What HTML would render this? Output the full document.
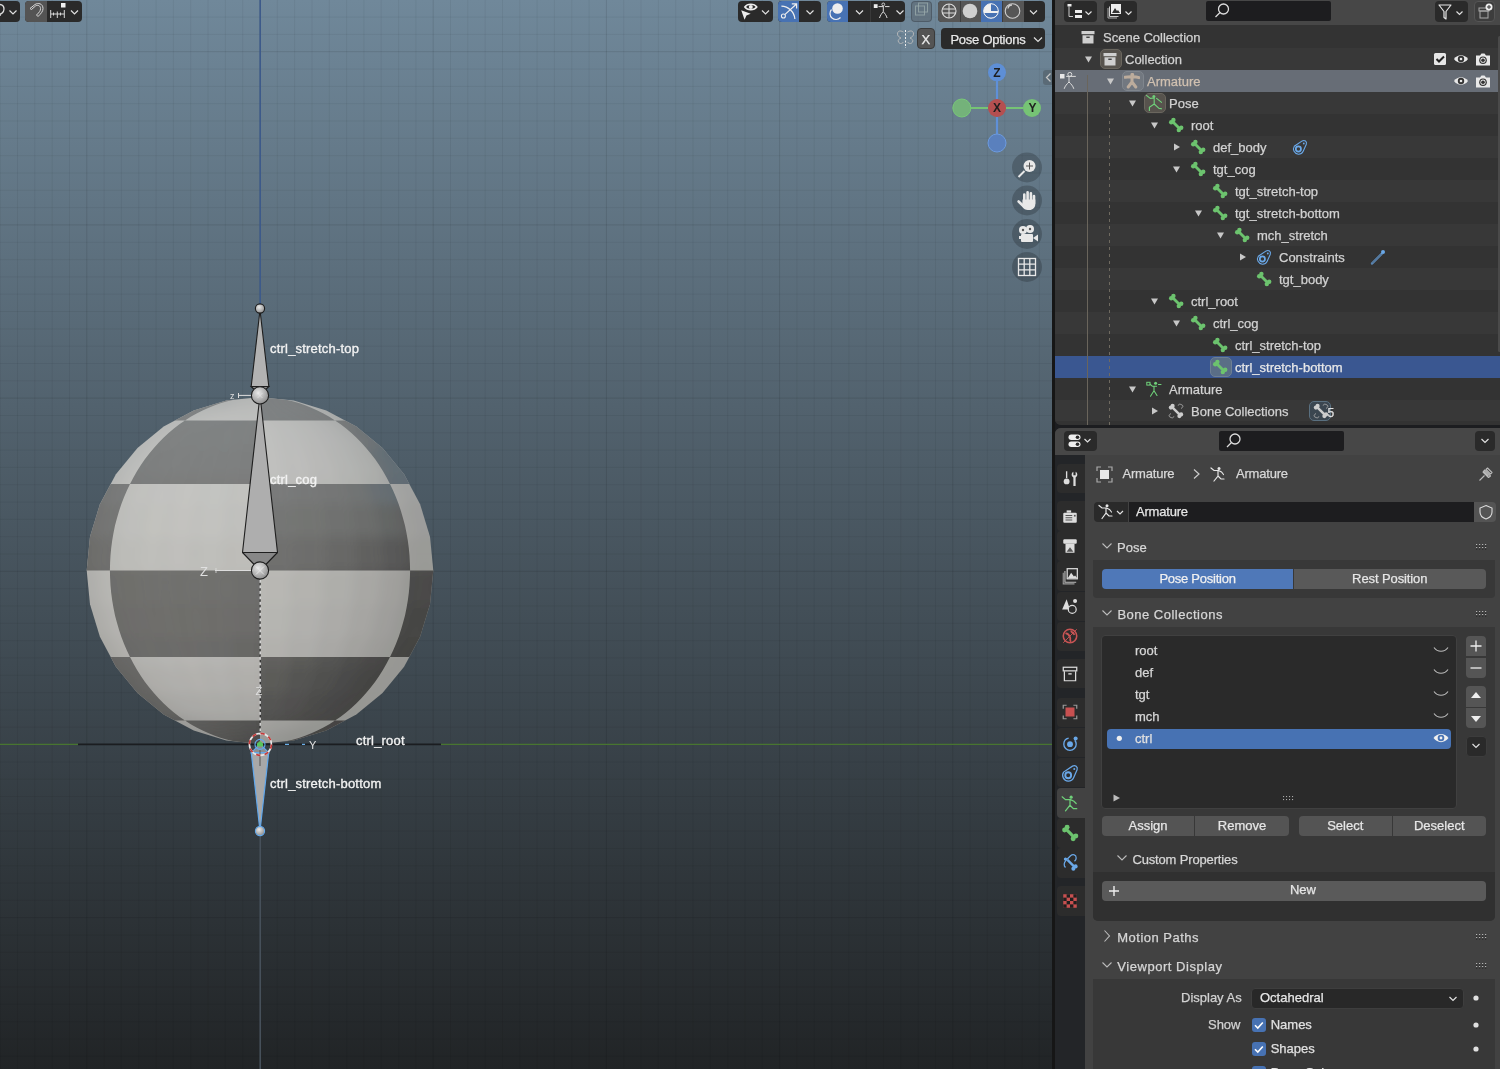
<!DOCTYPE html>
<html><head><meta charset="utf-8">
<style>
*{box-sizing:border-box;margin:0;padding:0}
html,body{width:1500px;height:1069px;overflow:hidden;background:#1c1d20;font-family:"Liberation Sans",sans-serif;font-size:13px;color:#d4d4d4}
.abs{position:absolute}
#vp{position:absolute;left:0;top:0;width:1052px;height:1069px;background:linear-gradient(#70889a,#212426);overflow:hidden;will-change:transform}
.btn{position:absolute;background:#2a2a2a;border-radius:4px;height:21px}
.t{position:absolute;white-space:nowrap;line-height:13px;-webkit-text-stroke:0.25px currentColor}
svg{position:absolute;overflow:visible}
</style></head><body>
<svg width="0" height="0" style="position:absolute;left:0;top:0">
<defs>
<symbol id="i-coll" viewBox="0 0 16 16"><rect x="1.5" y="2" width="13" height="3.2" fill="#cfcfcf"/><path d="M2.5 6.2h11v8.3h-11z" fill="#cfcfcf"/><rect x="6.3" y="7.6" width="3.4" height="1.3" fill="#333"/></symbol>
<symbol id="i-arm" viewBox="0 0 16 16"><g fill="none" stroke="#bcac9c" stroke-width="3" stroke-linecap="round" stroke-linejoin="round"><path d="M1 4.2C4 3.6 12 3.6 15 4.6M8 4V9M8 9L4.2 14M8 9L11.8 14"/></g><circle cx="8.3" cy="1.8" r="1.9" fill="#bcac9c"/></symbol>
<symbol id="i-pose" viewBox="0 0 16 16"><g fill="none" stroke="#6fd07a" stroke-width="1.15" stroke-linecap="round" stroke-linejoin="round"><path d="M0.4 0.4L4.2 3.4 8.2 3M10.6 3.4L15.6 7.4M8.2 3V9M8.2 9L3.4 12.2V15.6M8.2 9L13 13.4 15.6 13.8"/></g><circle cx="7.9" cy="1.6" r="1.5" fill="#6fd07a"/></symbol>
<symbol id="i-bone" viewBox="0 0 16 16"><g fill="#6cc36e"><circle cx="3.2" cy="5.3" r="2.2"/><circle cx="5.4" cy="2.9" r="2.2"/><circle cx="10.8" cy="13.1" r="2.2"/><circle cx="13.2" cy="10.7" r="2.2"/><path d="M3.5 5.5l2-2 7.5 7.5-2 2z"/></g></symbol>
<symbol id="i-con" viewBox="0 0 16 16"><path d="M6.3 15.2A5.2 5.2 0 0 1 2.3 7.2L10.2 1.9C12.6 0.6 15.2 2.5 14.3 5.2L11.2 12.2A5.2 5.2 0 0 1 6.3 15.2z" fill="none" stroke="#6aa8e8" stroke-width="1.1"/><circle cx="6.4" cy="10" r="2.6" fill="none" stroke="#6aa8e8" stroke-width="1.7"/><circle cx="11.8" cy="4.5" r="0.9" fill="#6aa8e8"/></symbol>
<symbol id="i-pencil" viewBox="0 0 16 16"><path d="M2 14.5l9.5-9.5" stroke="#6aa8e8" stroke-width="2.2" stroke-linecap="round"/><path d="M2 14.5l9.5-9.5" stroke="#333" stroke-width="0.8" stroke-linecap="round"/><circle cx="13" cy="3" r="2" fill="#6aa8e8"/></symbol>
<symbol id="i-armdata" viewBox="0 0 16 16"><rect x="0.8" y="1.3" width="3.2" height="2.8" fill="none" stroke="#6fd07a" stroke-width="1"/><circle cx="9.6" cy="2.2" r="1.5" fill="#6fd07a"/><g fill="none" stroke="#6fd07a" stroke-width="1.1" stroke-linecap="round"><path d="M4 3.2l2.3 2h4.2M12.5 3.5h2.5M8 5.2v4.5l-3.5 5.5M8 9.7l3 4.8"/></g></symbol>
<symbol id="i-bonecoll" viewBox="0 0 16 16"><g fill="#cdcdcd"><circle cx="2.9" cy="4.6" r="2.1"/><circle cx="4.6" cy="2.9" r="2.1"/><circle cx="11.4" cy="13.1" r="2.1"/><circle cx="13.1" cy="11.4" r="2.1"/><path d="M3 4.7l1.7-1.7 8.3 8.3-1.7 1.7z"/></g><g fill="none" stroke="#a8a8a8" stroke-width="0.9"><path d="M10.2 2.6a1.6 1.6 0 0 1 2.8-0.9 1.6 1.6 0 0 1 1.5 2.6l-1.5 1.2"/><path d="M5.8 13.4a1.6 1.6 0 0 1-2.8 0.9 1.6 1.6 0 0 1-1.5-2.6l1.5-1.2"/></g></symbol>
<symbol id="i-eye" viewBox="0 0 16 16"><path d="M1 8c3.5-5 10.5-5 14 0-3.5 5-10.5 5-14 0z" fill="#e8e8e8"/><circle cx="8" cy="8" r="3.2" fill="#333"/><circle cx="8" cy="8" r="1.3" fill="#e8e8e8"/></symbol>
<symbol id="i-cam" viewBox="0 0 16 16"><path d="M1 4.5h4l1.5-2h3l1.5 2h4v10h-14z" fill="#e8e8e8"/><circle cx="8" cy="9.2" r="3.8" fill="#333"/><circle cx="8" cy="9.2" r="2.6" fill="#e8e8e8"/><circle cx="8" cy="9.2" r="1.8" fill="#333"/></symbol>
<symbol id="i-posemode" viewBox="0 0 20 20"><rect x="3" y="2" width="4.5" height="4.5" fill="#e8e8e8"/><circle cx="12.8" cy="2.4" r="2" fill="none" stroke="#ddd" stroke-width="1"/><path d="M9.2 4.4h9.6M12 4.4v5.6M12 10c-2 2-4 4-4.8 6.8M12 10c2 2 4 4 4.8 6.8" stroke="#ddd" stroke-width="1" fill="none"/></symbol>
<symbol id="i-chev" viewBox="0 0 10 10"><path d="M1.5 3l3.5 3.5 3.5-3.5" stroke="#e0e0e0" stroke-width="1.2" fill="none"/></symbol>
</defs></svg>

<div id="vp">
<svg width="1052" height="1069" style="left:0;top:0">
<defs>
<radialGradient id="shade" cx="200" cy="470" r="330" gradientUnits="userSpaceOnUse">
<stop offset="0" stop-color="#ffffff"/><stop offset="0.45" stop-color="#fafafa"/><stop offset="0.75" stop-color="#c4c4c4"/><stop offset="1" stop-color="#8c8c8c"/>
</radialGradient>
<radialGradient id="sheen" cx="150" cy="430" r="200" gradientUnits="userSpaceOnUse">
<stop offset="0" stop-color="#2c3440"/><stop offset="0.6" stop-color="#1c2228"/><stop offset="1" stop-color="#000000"/>
</radialGradient>
<radialGradient id="rim" cx="260" cy="570.5" r="174" gradientUnits="userSpaceOnUse">
<stop offset="0.88" stop-color="#5a6e7c" stop-opacity="0"/><stop offset="1" stop-color="#5a6e7c" stop-opacity="0.3"/>
</radialGradient>
<radialGradient id="ball" cx="0.4" cy="0.35" r="0.7">
<stop offset="0" stop-color="#e8e8e8"/><stop offset="1" stop-color="#8a8a8a"/>
</radialGradient>
</defs>
<path d="M0.2 0V1069 M17.5 0V1069 M34.8 0V1069 M52.2 0V1069 M69.5 0V1069 M104.1 0V1069 M121.4 0V1069 M138.8 0V1069 M156.1 0V1069 M173.4 0V1069 M190.7 0V1069 M208.0 0V1069 M225.4 0V1069 M242.7 0V1069 M277.3 0V1069 M294.6 0V1069 M312.0 0V1069 M329.3 0V1069 M346.6 0V1069 M363.9 0V1069 M381.2 0V1069 M398.6 0V1069 M415.9 0V1069 M450.5 0V1069 M467.8 0V1069 M485.2 0V1069 M502.5 0V1069 M519.8 0V1069 M537.1 0V1069 M554.4 0V1069 M571.8 0V1069 M589.1 0V1069 M623.7 0V1069 M641.0 0V1069 M658.4 0V1069 M675.7 0V1069 M693.0 0V1069 M710.3 0V1069 M727.6 0V1069 M745.0 0V1069 M762.3 0V1069 M796.9 0V1069 M814.2 0V1069 M831.6 0V1069 M848.9 0V1069 M866.2 0V1069 M883.5 0V1069 M900.8 0V1069 M918.2 0V1069 M935.5 0V1069 M970.1 0V1069 M987.4 0V1069 M1004.8 0V1069 M1022.1 0V1069 M1039.4 0V1069 M0 17.1H1052 M0 34.4H1052 M0 69.1H1052 M0 86.4H1052 M0 103.7H1052 M0 121.0H1052 M0 138.3H1052 M0 155.7H1052 M0 173.0H1052 M0 190.3H1052 M0 207.6H1052 M0 242.3H1052 M0 259.6H1052 M0 276.9H1052 M0 294.2H1052 M0 311.5H1052 M0 328.9H1052 M0 346.2H1052 M0 363.5H1052 M0 380.8H1052 M0 415.5H1052 M0 432.8H1052 M0 450.1H1052 M0 467.4H1052 M0 484.7H1052 M0 502.1H1052 M0 519.4H1052 M0 536.7H1052 M0 554.0H1052 M0 588.7H1052 M0 606.0H1052 M0 623.3H1052 M0 640.6H1052 M0 657.9H1052 M0 675.3H1052 M0 692.6H1052 M0 709.9H1052 M0 727.2H1052 M0 761.9H1052 M0 779.2H1052 M0 796.5H1052 M0 813.8H1052 M0 831.1H1052 M0 848.5H1052 M0 865.8H1052 M0 883.1H1052 M0 900.4H1052 M0 935.1H1052 M0 952.4H1052 M0 969.7H1052 M0 987.0H1052 M0 1004.3H1052 M0 1021.7H1052 M0 1039.0H1052 M0 1056.3H1052" stroke="#000" stroke-opacity="0.05" stroke-width="1" fill="none"/>
<path d="M86.8 0V1069 M260.0 0V1069 M433.2 0V1069 M606.4 0V1069 M779.6 0V1069 M952.8 0V1069 M0 51.7H1052 M0 224.9H1052 M0 398.1H1052 M0 571.3H1052 M0 744.5H1052 M0 917.7H1052" stroke="#000" stroke-opacity="0.10" stroke-width="1" fill="none"/>

<!-- axis lines -->
<path d="M260.2 0V310" stroke="#3d5a8a" stroke-width="1.6"/>
<path d="M260.2 835V1069" stroke="#46505a" stroke-width="1.6"/>
<path d="M0 744.4H80M440 744.4H1052" stroke="#487530" stroke-width="1.4"/>
<!-- sphere -->
<clipPath id="sil"><path d="M433.3,570.5 L430.0,536.7 L420.1,504.2 L404.1,474.2 L382.5,448.0 L356.3,426.4 L326.3,410.4 L293.8,400.5 L260.0,397.2 L226.2,400.5 L193.7,410.4 L163.7,426.4 L137.5,448.0 L115.9,474.2 L99.9,504.2 L90.0,536.7 L86.7,570.5 L90.0,604.3 L99.9,636.8 L115.9,666.8 L137.5,693.0 L163.7,714.6 L193.7,730.6 L226.2,740.5 L260.0,743.8 L293.8,740.5 L326.3,730.6 L356.3,714.6 L382.5,693.0 L404.1,666.8 L420.1,636.8 L430.0,604.3Z"/></clipPath>
<clipPath id="darkc"><path d="M168.2,729.6 L173.4,720.6 L173.7,720.6 L174.1,720.6 L174.7,720.6 L175.4,720.6 L176.3,720.6 L177.4,720.6 L178.6,720.6 L179.9,720.6 L181.5,720.6 L183.1,720.6 L185.0,720.6 L185.0,720.6 L179.4,716.7 L173.9,712.5 L168.6,708.0 L163.5,703.3 L158.6,698.3 L153.9,693.0 L149.3,687.6 L145.0,681.9 L140.9,676.0 L137.1,669.9 L133.4,663.6 L130.0,657.1 L130.0,657.1 L126.9,657.1 L124.0,657.1 L121.3,657.1 L119.0,657.1 L116.9,657.1 L115.0,657.1 L113.5,657.1 L112.2,657.1 L111.2,657.1 L110.5,657.1 L110.1,657.1 L100.9,662.3 L100.9,662.3 L105.1,669.2 L109.5,675.9 L114.3,682.3 L119.3,688.6 L124.6,694.6 L130.1,700.4 L135.9,705.9 L141.9,711.2 L148.2,716.2 L154.6,721.0 L161.3,725.4 L168.2,729.6Z M76.3,570.5 L86.9,570.5 L87.4,570.5 L88.2,570.5 L89.3,570.5 L90.8,570.5 L92.6,570.5 L94.7,570.5 L97.2,570.5 L99.9,570.5 L102.9,570.5 L106.3,570.5 L109.9,570.5 L109.9,570.5 L110.1,562.9 L110.5,555.4 L111.2,547.9 L112.2,540.4 L113.5,533.0 L115.0,525.6 L116.9,518.4 L119.0,511.2 L121.3,504.2 L124.0,497.3 L126.9,490.5 L130.0,483.9 L130.0,483.9 L126.9,483.9 L124.0,483.9 L121.3,483.9 L119.0,483.9 L116.9,483.9 L115.0,483.9 L113.5,483.9 L112.2,483.9 L111.2,483.9 L110.5,483.9 L110.1,483.9 L100.9,478.7 L100.9,478.7 L97.1,485.7 L93.5,492.9 L90.3,500.2 L87.4,507.7 L84.8,515.3 L82.6,523.0 L80.7,530.7 L79.1,538.6 L77.9,546.5 L77.0,554.5 L76.5,562.5 L76.3,570.5Z M168.2,411.4 L173.4,420.4 L173.7,420.4 L174.1,420.4 L174.7,420.4 L175.4,420.4 L176.3,420.4 L177.4,420.4 L178.6,420.4 L179.9,420.4 L181.5,420.4 L183.1,420.4 L185.0,420.4 L185.0,420.4 L190.7,416.8 L196.6,413.4 L202.6,410.4 L208.7,407.7 L214.9,405.2 L221.2,403.1 L227.5,401.3 L233.9,399.8 L240.4,398.7 L246.9,397.9 L253.5,397.4 L260.0,386.8 L260.0,386.8 L260.0,386.8 L260.0,386.8 L260.0,386.8 L260.0,386.8 L260.0,386.8 L260.0,386.8 L260.0,386.8 L260.0,386.8 L260.0,386.8 L260.0,386.8 L260.0,386.8 L260.0,386.8 L260.0,386.8 L252.0,387.0 L244.0,387.5 L236.0,388.4 L228.1,389.6 L220.2,391.2 L212.5,393.1 L204.8,395.3 L197.2,397.9 L189.7,400.8 L182.4,404.0 L175.2,407.6 L168.2,411.4Z M260.0,754.2 L260.0,754.2 L260.0,754.2 L260.0,754.2 L260.0,754.2 L260.0,754.2 L260.0,754.2 L260.0,754.2 L260.0,754.2 L260.0,754.2 L260.0,754.2 L260.0,754.2 L260.0,754.2 L260.0,754.2 L260.0,743.6 L260.0,743.1 L260.0,742.3 L260.0,741.2 L260.0,739.7 L260.0,737.9 L260.0,735.8 L260.0,733.3 L260.0,730.6 L260.0,727.6 L260.0,724.2 L260.0,720.6 L260.0,720.6 L252.4,720.6 L245.0,720.6 L237.6,720.6 L230.4,720.6 L223.4,720.6 L216.7,720.6 L210.3,720.6 L204.3,720.6 L198.7,720.6 L193.6,720.6 L189.0,720.6 L185.0,720.6 L185.0,720.6 L190.7,724.2 L196.6,727.6 L202.6,730.6 L208.7,733.3 L214.9,735.8 L221.2,737.9 L227.5,739.7 L233.9,741.2 L240.4,742.3 L246.9,743.1 L253.5,743.6 L260.0,754.2Z M130.0,657.1 L137.1,657.1 L145.0,657.1 L153.9,657.1 L163.5,657.1 L173.9,657.1 L185.0,657.1 L196.6,657.1 L208.7,657.1 L221.2,657.1 L233.9,657.1 L246.9,657.1 L260.0,657.1 L260.0,657.1 L260.0,650.5 L260.0,643.7 L260.0,636.8 L260.0,629.8 L260.0,622.6 L260.0,615.4 L260.0,608.0 L260.0,600.6 L260.0,593.1 L260.0,585.6 L260.0,578.1 L260.0,570.5 L260.0,570.5 L244.9,570.5 L229.9,570.5 L215.1,570.5 L200.7,570.5 L186.8,570.5 L173.4,570.5 L160.6,570.5 L148.6,570.5 L137.5,570.5 L127.2,570.5 L118.0,570.5 L109.9,570.5 L109.9,570.5 L110.1,578.1 L110.5,585.6 L111.2,593.1 L112.2,600.6 L113.5,608.0 L115.0,615.4 L116.9,622.6 L119.0,629.8 L121.3,636.8 L124.0,643.7 L126.9,650.5 L130.0,657.1Z M130.0,483.9 L137.1,483.9 L145.0,483.9 L153.9,483.9 L163.5,483.9 L173.9,483.9 L185.0,483.9 L196.6,483.9 L208.7,483.9 L221.2,483.9 L233.9,483.9 L246.9,483.9 L260.0,483.9 L260.0,483.9 L260.0,477.4 L260.0,471.1 L260.0,465.0 L260.0,459.1 L260.0,453.4 L260.0,448.0 L260.0,442.7 L260.0,437.7 L260.0,433.0 L260.0,428.5 L260.0,424.3 L260.0,420.4 L260.0,420.4 L252.4,420.4 L245.0,420.4 L237.6,420.4 L230.4,420.4 L223.4,420.4 L216.7,420.4 L210.3,420.4 L204.3,420.4 L198.7,420.4 L193.6,420.4 L189.0,420.4 L185.0,420.4 L185.0,420.4 L179.4,424.3 L173.9,428.5 L168.6,433.0 L163.5,437.7 L158.6,442.7 L153.9,448.0 L149.3,453.4 L145.0,459.1 L140.9,465.0 L137.1,471.1 L133.4,477.4 L130.0,483.9Z M260.0,720.6 L267.6,720.6 L275.0,720.6 L282.4,720.6 L289.6,720.6 L296.6,720.6 L303.3,720.6 L309.7,720.6 L315.7,720.6 L321.3,720.6 L326.4,720.6 L331.0,720.6 L335.0,720.6 L335.0,720.6 L340.6,716.7 L346.1,712.5 L351.4,708.0 L356.5,703.3 L361.4,698.3 L366.1,693.0 L370.7,687.6 L375.0,681.9 L379.1,676.0 L382.9,669.9 L386.6,663.6 L390.0,657.1 L390.0,657.1 L382.9,657.1 L375.0,657.1 L366.1,657.1 L356.5,657.1 L346.1,657.1 L335.0,657.1 L323.4,657.1 L311.3,657.1 L298.8,657.1 L286.1,657.1 L273.1,657.1 L260.0,657.1 L260.0,657.1 L260.0,663.6 L260.0,669.9 L260.0,676.0 L260.0,681.9 L260.0,687.6 L260.0,693.0 L260.0,698.3 L260.0,703.3 L260.0,708.0 L260.0,712.5 L260.0,716.7 L260.0,720.6Z M260.0,570.5 L275.1,570.5 L290.1,570.5 L304.9,570.5 L319.3,570.5 L333.2,570.5 L346.6,570.5 L359.4,570.5 L371.4,570.5 L382.5,570.5 L392.8,570.5 L402.0,570.5 L410.1,570.5 L410.1,570.5 L409.9,562.9 L409.5,555.4 L408.8,547.9 L407.8,540.4 L406.5,533.0 L405.0,525.6 L403.1,518.4 L401.0,511.2 L398.7,504.2 L396.0,497.3 L393.1,490.5 L390.0,483.9 L390.0,483.9 L382.9,483.9 L375.0,483.9 L366.1,483.9 L356.5,483.9 L346.1,483.9 L335.0,483.9 L323.4,483.9 L311.3,483.9 L298.8,483.9 L286.1,483.9 L273.1,483.9 L260.0,483.9 L260.0,483.9 L260.0,490.5 L260.0,497.3 L260.0,504.2 L260.0,511.2 L260.0,518.4 L260.0,525.6 L260.0,533.0 L260.0,540.4 L260.0,547.9 L260.0,555.4 L260.0,562.9 L260.0,570.5Z M260.0,420.4 L267.6,420.4 L275.0,420.4 L282.4,420.4 L289.6,420.4 L296.6,420.4 L303.3,420.4 L309.7,420.4 L315.7,420.4 L321.3,420.4 L326.4,420.4 L331.0,420.4 L335.0,420.4 L335.0,420.4 L329.3,416.8 L323.4,413.4 L317.4,410.4 L311.3,407.7 L305.1,405.2 L298.8,403.1 L292.5,401.3 L286.1,399.8 L279.6,398.7 L273.1,397.9 L266.5,397.4 L260.0,386.8 L260.0,386.8 L260.0,386.8 L260.0,386.8 L260.0,386.8 L260.0,386.8 L260.0,386.8 L260.0,386.8 L260.0,386.8 L260.0,386.8 L260.0,386.8 L260.0,386.8 L260.0,386.8 L260.0,386.8 L260.0,386.8 L260.0,397.4 L260.0,397.9 L260.0,398.7 L260.0,399.8 L260.0,401.3 L260.0,403.1 L260.0,405.2 L260.0,407.7 L260.0,410.4 L260.0,413.4 L260.0,416.8 L260.0,420.4Z M260.0,754.2 L260.0,754.2 L260.0,754.2 L260.0,754.2 L260.0,754.2 L260.0,754.2 L260.0,754.2 L260.0,754.2 L260.0,754.2 L260.0,754.2 L260.0,754.2 L260.0,754.2 L260.0,754.2 L260.0,754.2 L268.0,754.0 L276.0,753.5 L284.0,752.6 L291.9,751.4 L299.8,749.8 L307.5,747.9 L315.2,745.7 L322.8,743.1 L330.3,740.2 L337.6,737.0 L344.8,733.4 L351.8,729.6 L351.8,729.6 L346.6,720.6 L346.3,720.6 L345.9,720.6 L345.3,720.6 L344.6,720.6 L343.7,720.6 L342.6,720.6 L341.4,720.6 L340.1,720.6 L338.5,720.6 L336.9,720.6 L335.0,720.6 L335.0,720.6 L329.3,724.2 L323.4,727.6 L317.4,730.6 L311.3,733.3 L305.1,735.8 L298.8,737.9 L292.5,739.7 L286.1,741.2 L279.6,742.3 L273.1,743.1 L266.5,743.6 L260.0,754.2Z M390.0,657.1 L393.1,657.1 L396.0,657.1 L398.7,657.1 L401.0,657.1 L403.1,657.1 L405.0,657.1 L406.5,657.1 L407.8,657.1 L408.8,657.1 L409.5,657.1 L409.9,657.1 L419.1,662.3 L419.1,662.3 L422.9,655.3 L426.5,648.1 L429.7,640.8 L432.6,633.3 L435.2,625.7 L437.4,618.0 L439.3,610.3 L440.9,602.4 L442.1,594.5 L443.0,586.5 L443.5,578.5 L443.7,570.5 L443.7,570.5 L433.1,570.5 L432.6,570.5 L431.8,570.5 L430.7,570.5 L429.2,570.5 L427.4,570.5 L425.3,570.5 L422.8,570.5 L420.1,570.5 L417.1,570.5 L413.7,570.5 L410.1,570.5 L410.1,570.5 L409.9,578.1 L409.5,585.6 L408.8,593.1 L407.8,600.6 L406.5,608.0 L405.0,615.4 L403.1,622.6 L401.0,629.8 L398.7,636.8 L396.0,643.7 L393.1,650.5 L390.0,657.1Z M390.0,483.9 L393.1,483.9 L396.0,483.9 L398.7,483.9 L401.0,483.9 L403.1,483.9 L405.0,483.9 L406.5,483.9 L407.8,483.9 L408.8,483.9 L409.5,483.9 L409.9,483.9 L419.1,478.7 L419.1,478.7 L414.9,471.8 L410.5,465.1 L405.7,458.7 L400.7,452.4 L395.4,446.4 L389.9,440.6 L384.1,435.1 L378.1,429.8 L371.8,424.8 L365.4,420.0 L358.7,415.6 L351.8,411.4 L351.8,411.4 L346.6,420.4 L346.3,420.4 L345.9,420.4 L345.3,420.4 L344.6,420.4 L343.7,420.4 L342.6,420.4 L341.4,420.4 L340.1,420.4 L338.5,420.4 L336.9,420.4 L335.0,420.4 L335.0,420.4 L340.6,424.3 L346.1,428.5 L351.4,433.0 L356.5,437.7 L361.4,442.7 L366.1,448.0 L370.7,453.4 L375.0,459.1 L379.1,465.0 L382.9,471.1 L386.6,477.4 L390.0,483.9Z"/></clipPath>
<filter id="sblur" x="-10%" y="-10%" width="120%" height="120%"><feGaussianBlur stdDeviation="6"/></filter>
<g clip-path="url(#sil)">
<g filter="url(#sblur)"><path d="M221 766 227 740 222 770 221 770z" fill="#999995"/><path d="M227 740 229 740 224 770 222 770z" fill="#999995"/><path d="M229 740 232 740 228 770 224 770z" fill="#999995"/><path d="M232 740 236 740 233 770 228 770z" fill="#999995"/><path d="M236 740 241 740 238 770 233 770z" fill="#999995"/><path d="M241 740 247 740 245 770 238 770z" fill="#999995"/><path d="M247 740 253 740 252 770 245 770z" fill="#999995"/><path d="M253 740 260 740 260 770 252 770z" fill="#999995"/><path d="M260 740 267 740 268 770 260 770z" fill="#999995"/><path d="M267 740 273 740 275 770 268 770z" fill="#999995"/><path d="M273 740 279 740 282 770 275 770z" fill="#999995"/><path d="M279 740 284 740 287 770 282 770z" fill="#999995"/><path d="M284 740 288 740 292 770 287 770z" fill="#999995"/><path d="M288 740 291 740 296 770 292 770z" fill="#999995"/><path d="M291 740 293 740 298 770 296 770z" fill="#999995"/><path d="M293 740 299 766 299 770 298 770z" fill="#999995"/><path d="M221 766 227 740 195 731 184 755z" fill="#999995"/><path d="M227 740 229 740 199 731 195 731z" fill="#999995"/><path d="M229 740 232 740 205 731 199 731z" fill="#9b9a97"/><path d="M232 740 236 740 213 731 205 731z" fill="#9c9b98"/><path d="M236 740 241 740 223 731 213 731z" fill="#9c9c99"/><path d="M241 740 247 740 235 731 223 731z" fill="#9d9c99"/><path d="M247 740 253 740 247 731 235 731z" fill="#9d9c99"/><path d="M253 740 260 740 260 731 247 731z" fill="#9c9b98"/><path d="M260 740 267 740 273 731 260 731z" fill="#9b9a97"/><path d="M267 740 273 740 285 731 273 731z" fill="#999995"/><path d="M273 740 279 740 297 731 285 731z" fill="#999995"/><path d="M279 740 284 740 307 731 297 731z" fill="#999995"/><path d="M284 740 288 740 315 731 307 731z" fill="#999995"/><path d="M288 740 291 740 321 731 315 731z" fill="#999995"/><path d="M291 740 293 740 325 731 321 731z" fill="#999995"/><path d="M293 740 299 766 336 755 325 731z" fill="#999995"/><path d="M184 755 195 731 166 715 149 736z" fill="#9c9b98"/><path d="M195 731 199 731 171 715 166 715z" fill="#9f9e9b"/><path d="M199 731 205 731 180 715 171 715z" fill="#a1a19d"/><path d="M205 731 213 731 192 715 180 715z" fill="#a3a29f"/><path d="M213 731 223 731 207 715 192 715z" fill="#a4a3a0"/><path d="M223 731 235 731 223 715 207 715z" fill="#a5a4a1"/><path d="M235 731 247 731 241 715 223 715z" fill="#a4a4a0"/><path d="M247 731 260 731 260 715 241 715z" fill="#a3a39f"/><path d="M260 731 273 731 279 715 260 715z" fill="#a2a19e"/><path d="M273 731 285 731 297 715 279 715z" fill="#9f9f9b"/><path d="M285 731 297 731 313 715 297 715z" fill="#9c9c98"/><path d="M297 731 307 731 328 715 313 715z" fill="#999995"/><path d="M307 731 315 731 340 715 328 715z" fill="#999995"/><path d="M315 731 321 731 349 715 340 715z" fill="#999995"/><path d="M321 731 325 731 354 715 349 715z" fill="#999995"/><path d="M325 731 336 755 371 736 354 715z" fill="#999995"/><path d="M149 736 166 715 140 693 119 711z" fill="#a1a09d"/><path d="M166 715 171 715 147 693 140 693z" fill="#a5a4a0"/><path d="M171 715 180 715 158 693 147 693z" fill="#a8a7a3"/><path d="M180 715 192 715 173 693 158 693z" fill="#aaa9a6"/><path d="M192 715 207 715 192 693 173 693z" fill="#abaaa7"/><path d="M207 715 223 715 213 693 192 693z" fill="#acaba7"/><path d="M223 715 241 715 236 693 213 693z" fill="#ababa7"/><path d="M241 715 260 715 260 693 236 693z" fill="#aaa9a6"/><path d="M260 715 279 715 284 693 260 693z" fill="#a8a7a4"/><path d="M279 715 297 715 307 693 284 693z" fill="#a5a4a1"/><path d="M297 715 313 715 328 693 307 693z" fill="#a1a09d"/><path d="M313 715 328 715 347 693 328 693z" fill="#9d9c99"/><path d="M328 715 340 715 362 693 347 693z" fill="#999995"/><path d="M340 715 349 715 373 693 362 693z" fill="#999995"/><path d="M349 715 354 715 380 693 373 693z" fill="#999995"/><path d="M354 715 371 736 401 711 380 693z" fill="#999995"/><path d="M119 711 140 693 119 667 94 681z" fill="#a5a4a1"/><path d="M140 693 147 693 127 667 119 667z" fill="#a9a9a5"/><path d="M147 693 158 693 140 667 127 667z" fill="#adaca9"/><path d="M158 693 173 693 158 667 140 667z" fill="#b0afab"/><path d="M173 693 192 693 180 667 158 667z" fill="#b1b0ad"/><path d="M192 693 213 693 205 667 180 667z" fill="#b2b1ad"/><path d="M213 693 236 693 232 667 205 667z" fill="#b1b0ad"/><path d="M236 693 260 693 260 667 232 667z" fill="#b0afab"/><path d="M260 693 284 693 288 667 260 667z" fill="#adaca9"/><path d="M284 693 307 693 315 667 288 667z" fill="#aaa9a6"/><path d="M307 693 328 693 340 667 315 667z" fill="#a5a5a1"/><path d="M328 693 347 693 362 667 340 667z" fill="#a09f9c"/><path d="M347 693 362 693 380 667 362 667z" fill="#9a9996"/><path d="M362 693 373 693 393 667 380 667z" fill="#999995"/><path d="M373 693 380 693 401 667 393 667z" fill="#999995"/><path d="M380 693 401 711 426 681 401 667z" fill="#999995"/><path d="M94 681 119 667 103 637 76 647z" fill="#a9a8a4"/><path d="M119 667 127 667 112 637 103 637z" fill="#aeada9"/><path d="M127 667 140 667 127 637 112 637z" fill="#b2b1ad"/><path d="M140 667 158 667 147 637 127 637z" fill="#b4b4b0"/><path d="M158 667 180 667 171 637 147 637z" fill="#b6b5b2"/><path d="M180 667 205 667 199 637 171 637z" fill="#b7b6b2"/><path d="M205 667 232 667 229 637 199 637z" fill="#b6b5b2"/><path d="M232 667 260 667 260 637 229 637z" fill="#b5b4b0"/><path d="M260 667 288 667 291 637 260 637z" fill="#b2b1ad"/><path d="M288 667 315 667 321 637 291 637z" fill="#aeadaa"/><path d="M315 667 340 667 349 637 321 637z" fill="#a9a8a5"/><path d="M340 667 362 667 373 637 349 637z" fill="#a3a29f"/><path d="M362 667 380 667 393 637 373 637z" fill="#9d9c99"/><path d="M380 667 393 667 408 637 393 637z" fill="#999995"/><path d="M393 667 401 667 417 637 408 637z" fill="#999995"/><path d="M401 667 426 681 444 647 417 637z" fill="#999995"/><path d="M76 647 103 637 93 604 65 609z" fill="#acaba7"/><path d="M103 637 112 637 103 604 93 604z" fill="#b1b0ac"/><path d="M112 637 127 637 119 604 103 604z" fill="#b5b4b1"/><path d="M127 637 147 637 140 604 119 604z" fill="#b8b7b4"/><path d="M147 637 171 637 166 604 140 604z" fill="#bab9b5"/><path d="M171 637 199 637 195 604 166 604z" fill="#bbbab6"/><path d="M199 637 229 637 227 604 195 604z" fill="#bab9b6"/><path d="M229 637 260 637 260 604 227 604z" fill="#b8b7b4"/><path d="M260 637 291 637 293 604 260 604z" fill="#b5b5b1"/><path d="M291 637 321 637 325 604 293 604z" fill="#b1b0ad"/><path d="M321 637 349 637 354 604 325 604z" fill="#acaba8"/><path d="M349 637 373 637 380 604 354 604z" fill="#a6a5a2"/><path d="M373 637 393 637 401 604 380 604z" fill="#9f9e9b"/><path d="M393 637 408 637 417 604 401 604z" fill="#999995"/><path d="M408 637 417 637 427 604 417 604z" fill="#999995"/><path d="M417 637 444 647 455 609 427 604z" fill="#999995"/><path d="M65 609 93 604 90 570 61 570z" fill="#aeadaa"/><path d="M93 604 103 604 100 570 90 570z" fill="#b3b2af"/><path d="M103 604 119 604 116 570 100 570z" fill="#b8b7b3"/><path d="M119 604 140 604 137 570 116 570z" fill="#bbbab6"/><path d="M140 604 166 604 164 570 137 570z" fill="#bdbcb8"/><path d="M166 604 195 604 194 570 164 570z" fill="#bdbcb9"/><path d="M195 604 227 604 226 570 194 570z" fill="#bdbcb8"/><path d="M227 604 260 604 260 570 226 570z" fill="#bbbab6"/><path d="M260 604 293 604 294 570 260 570z" fill="#b8b7b3"/><path d="M293 604 325 604 326 570 294 570z" fill="#b4b3af"/><path d="M325 604 354 604 356 570 326 570z" fill="#aeaeaa"/><path d="M354 604 380 604 383 570 356 570z" fill="#a8a7a4"/><path d="M380 604 401 604 404 570 383 570z" fill="#a1a09d"/><path d="M401 604 417 604 420 570 404 570z" fill="#999995"/><path d="M417 604 427 604 430 570 420 570z" fill="#999995"/><path d="M427 604 455 609 459 570 430 570z" fill="#999995"/><path d="M61 570 90 570 93 537 65 532z" fill="#b1b0ad"/><path d="M90 570 100 570 103 537 93 537z" fill="#b6b6b2"/><path d="M100 570 116 570 119 537 103 537z" fill="#babab6"/><path d="M116 570 137 570 140 537 119 537z" fill="#bdbdb9"/><path d="M137 570 164 570 166 537 140 537z" fill="#bfbfbb"/><path d="M164 570 194 570 195 537 166 537z" fill="#c0bfbc"/><path d="M194 570 226 570 227 537 195 537z" fill="#bfbfbb"/><path d="M226 570 260 570 260 537 227 537z" fill="#bebdb9"/><path d="M260 570 294 570 293 537 260 537z" fill="#bbbab7"/><path d="M294 570 326 570 325 537 293 537z" fill="#b7b6b3"/><path d="M326 570 356 570 354 537 325 537z" fill="#b1b1ae"/><path d="M356 570 383 570 380 537 354 537z" fill="#ababa7"/><path d="M383 570 404 570 401 537 380 537z" fill="#a4a4a1"/><path d="M404 570 420 570 417 537 401 537z" fill="#9c9c99"/><path d="M420 570 430 570 427 537 417 537z" fill="#9b9b98"/><path d="M430 570 459 570 455 532 427 537z" fill="#9b9b98"/><path d="M65 532 93 537 103 504 76 494z" fill="#b4b4b1"/><path d="M93 537 103 537 112 504 103 504z" fill="#b9b9b6"/><path d="M103 537 119 537 127 504 112 504z" fill="#bdbdba"/><path d="M119 537 140 537 147 504 127 504z" fill="#c0c0bd"/><path d="M140 537 166 537 171 504 147 504z" fill="#c2c2be"/><path d="M166 537 195 537 199 504 171 504z" fill="#c3c2bf"/><path d="M195 537 227 537 229 504 199 504z" fill="#c2c2bf"/><path d="M227 537 260 537 260 504 229 504z" fill="#c0c0bd"/><path d="M260 537 293 537 291 504 260 504z" fill="#bebdba"/><path d="M293 537 325 537 321 504 291 504z" fill="#babab7"/><path d="M325 537 354 537 349 504 321 504z" fill="#b5b5b2"/><path d="M354 537 380 537 373 504 349 504z" fill="#afafac"/><path d="M380 537 401 537 393 504 373 504z" fill="#a9a9a6"/><path d="M401 537 417 537 408 504 393 504z" fill="#a1a19f"/><path d="M417 537 427 537 417 504 408 504z" fill="#9e9e9c"/><path d="M427 537 455 532 444 494 417 504z" fill="#9e9e9c"/><path d="M76 494 103 504 119 474 94 460z" fill="#b7b7b5"/><path d="M103 504 112 504 127 474 119 474z" fill="#bbbcb9"/><path d="M112 504 127 504 140 474 127 474z" fill="#bfbfbc"/><path d="M127 504 147 504 158 474 140 474z" fill="#c2c2bf"/><path d="M147 504 171 504 180 474 158 474z" fill="#c3c3c1"/><path d="M171 504 199 504 205 474 180 474z" fill="#c4c4c1"/><path d="M199 504 229 504 232 474 205 474z" fill="#c3c4c1"/><path d="M229 504 260 504 260 474 232 474z" fill="#c2c2bf"/><path d="M260 504 291 504 288 474 260 474z" fill="#bfc0bd"/><path d="M291 504 321 504 315 474 288 474z" fill="#bcbcb9"/><path d="M321 504 349 504 340 474 315 474z" fill="#b7b8b5"/><path d="M349 504 373 504 362 474 340 474z" fill="#b2b3b0"/><path d="M373 504 393 504 380 474 362 474z" fill="#acadaa"/><path d="M393 504 408 504 393 474 380 474z" fill="#a6a6a4"/><path d="M408 504 417 504 401 474 393 474z" fill="#a1a2a0"/><path d="M417 504 444 494 426 460 401 474z" fill="#a1a2a0"/><path d="M94 460 119 474 140 448 119 430z" fill="#b8b9b7"/><path d="M119 474 127 474 147 448 140 448z" fill="#bcbdbb"/><path d="M127 474 140 474 158 448 147 448z" fill="#bfc0be"/><path d="M140 474 158 474 173 448 158 448z" fill="#c2c2c0"/><path d="M158 474 180 474 192 448 173 448z" fill="#c3c4c1"/><path d="M180 474 205 474 213 448 192 448z" fill="#c4c4c2"/><path d="M205 474 232 474 236 448 213 448z" fill="#c3c4c1"/><path d="M232 474 260 474 260 448 236 448z" fill="#c2c2c0"/><path d="M260 474 288 474 284 448 260 448z" fill="#c0c0be"/><path d="M288 474 315 474 307 448 284 448z" fill="#bdbdbb"/><path d="M315 474 340 474 328 448 307 448z" fill="#b9b9b7"/><path d="M340 474 362 474 347 448 328 448z" fill="#b4b5b3"/><path d="M362 474 380 474 362 448 347 448z" fill="#afb0ae"/><path d="M380 474 393 474 373 448 362 448z" fill="#aaaba9"/><path d="M393 474 401 474 380 448 373 448z" fill="#a4a5a3"/><path d="M401 474 426 460 401 430 380 448z" fill="#a4a5a3"/><path d="M119 430 140 448 166 426 149 405z" fill="#b9bab8"/><path d="M140 448 147 448 171 426 166 426z" fill="#bcbdbb"/><path d="M147 448 158 448 180 426 171 426z" fill="#bfbfbd"/><path d="M158 448 173 448 192 426 180 426z" fill="#c1c1bf"/><path d="M173 448 192 448 207 426 192 426z" fill="#c2c3c0"/><path d="M192 448 213 448 223 426 207 426z" fill="#c2c3c1"/><path d="M213 448 236 448 241 426 223 426z" fill="#c2c3c0"/><path d="M236 448 260 448 260 426 241 426z" fill="#c1c2bf"/><path d="M260 448 284 448 279 426 260 426z" fill="#bfc0be"/><path d="M284 448 307 448 297 426 279 426z" fill="#bcbdbb"/><path d="M307 448 328 448 313 426 297 426z" fill="#b9bab8"/><path d="M328 448 347 448 328 426 313 426z" fill="#b5b6b5"/><path d="M347 448 362 448 340 426 328 426z" fill="#b1b2b1"/><path d="M362 448 373 448 349 426 340 426z" fill="#adaead"/><path d="M373 448 380 448 354 426 349 426z" fill="#a8aaa8"/><path d="M380 448 401 430 371 405 354 426z" fill="#a6a8a6"/><path d="M149 405 166 426 195 410 184 386z" fill="#b8b9b8"/><path d="M166 426 171 426 199 410 195 410z" fill="#bbbcba"/><path d="M171 426 180 426 205 410 199 410z" fill="#bcbebc"/><path d="M180 426 192 426 213 410 205 410z" fill="#bebfbd"/><path d="M192 426 207 426 223 410 213 410z" fill="#bfc0be"/><path d="M207 426 223 426 235 410 223 410z" fill="#bfc0be"/><path d="M223 426 241 426 247 410 235 410z" fill="#bfc0be"/><path d="M241 426 260 426 260 410 247 410z" fill="#bebfbd"/><path d="M260 426 279 426 273 410 260 410z" fill="#bdbebc"/><path d="M279 426 297 426 285 410 273 410z" fill="#bbbcba"/><path d="M297 426 313 426 297 410 285 410z" fill="#b8bab8"/><path d="M313 426 328 426 307 410 297 410z" fill="#b6b7b5"/><path d="M328 426 340 426 315 410 307 410z" fill="#b3b4b2"/><path d="M340 426 349 426 321 410 315 410z" fill="#afb1af"/><path d="M349 426 354 426 325 410 321 410z" fill="#acadac"/><path d="M354 426 371 405 336 386 325 410z" fill="#a9aaa9"/><path d="M184 386 195 410 227 401 221 375z" fill="#b6b8b6"/><path d="M195 410 199 410 229 401 227 401z" fill="#b8b9b8"/><path d="M199 410 205 410 232 401 229 401z" fill="#b9bbb9"/><path d="M205 410 213 410 236 401 232 401z" fill="#babbba"/><path d="M213 410 223 410 241 401 236 401z" fill="#bbbcba"/><path d="M223 410 235 410 247 401 241 401z" fill="#bbbcbb"/><path d="M235 410 247 410 253 401 247 401z" fill="#bbbcba"/><path d="M247 410 260 410 260 401 253 401z" fill="#babbba"/><path d="M260 410 273 410 267 401 260 401z" fill="#b9bbb9"/><path d="M273 410 285 410 273 401 267 401z" fill="#b8b9b8"/><path d="M285 410 297 410 279 401 273 401z" fill="#b7b8b7"/><path d="M297 410 307 410 284 401 279 401z" fill="#b5b6b5"/><path d="M307 410 315 410 288 401 284 401z" fill="#b3b4b3"/><path d="M315 410 321 410 291 401 288 401z" fill="#b1b3b1"/><path d="M321 410 325 410 293 401 291 401z" fill="#afb1af"/><path d="M325 410 336 386 299 375 293 401z" fill="#adafae"/><path d="M221 375 227 401 222 371 221 371z" fill="#b4b5b4"/><path d="M227 401 229 401 224 371 222 371z" fill="#b4b6b4"/><path d="M229 401 232 401 228 371 224 371z" fill="#b5b6b5"/><path d="M232 401 236 401 233 371 228 371z" fill="#b5b6b5"/><path d="M236 401 241 401 238 371 233 371z" fill="#b5b7b5"/><path d="M241 401 247 401 245 371 238 371z" fill="#b5b7b5"/><path d="M247 401 253 401 252 371 245 371z" fill="#b5b7b5"/><path d="M253 401 260 401 260 371 252 371z" fill="#b5b6b5"/><path d="M260 401 267 401 268 371 260 371z" fill="#b5b6b5"/><path d="M267 401 273 401 275 371 268 371z" fill="#b4b6b5"/><path d="M273 401 279 401 282 371 275 371z" fill="#b4b5b4"/><path d="M279 401 284 401 287 371 282 371z" fill="#b3b5b3"/><path d="M284 401 288 401 292 371 287 371z" fill="#b2b4b3"/><path d="M288 401 291 401 296 371 292 371z" fill="#b2b3b2"/><path d="M291 401 293 401 298 371 296 371z" fill="#b1b3b2"/><path d="M293 401 299 375 299 371 298 371z" fill="#b0b2b1"/></g>
<g clip-path="url(#darkc)"><g filter="url(#sblur)"><path d="M221 766 227 740 222 770 221 770z" fill="#4c4b4a"/><path d="M227 740 229 740 224 770 222 770z" fill="#4c4b4a"/><path d="M229 740 232 740 228 770 224 770z" fill="#4c4b4a"/><path d="M232 740 236 740 233 770 228 770z" fill="#4b4b49"/><path d="M236 740 241 740 238 770 233 770z" fill="#4b4b49"/><path d="M241 740 247 740 245 770 238 770z" fill="#4b4a49"/><path d="M247 740 253 740 252 770 245 770z" fill="#4a4a48"/><path d="M253 740 260 740 260 770 252 770z" fill="#4a4a48"/><path d="M260 740 267 740 268 770 260 770z" fill="#494948"/><path d="M267 740 273 740 275 770 268 770z" fill="#494947"/><path d="M273 740 279 740 282 770 275 770z" fill="#494847"/><path d="M279 740 284 740 287 770 282 770z" fill="#484847"/><path d="M284 740 288 740 292 770 287 770z" fill="#484846"/><path d="M288 740 291 740 296 770 292 770z" fill="#484746"/><path d="M291 740 293 740 298 770 296 770z" fill="#484746"/><path d="M293 740 299 766 299 770 298 770z" fill="#484746"/><path d="M221 766 227 740 195 731 184 755z" fill="#51514f"/><path d="M227 740 229 740 199 731 195 731z" fill="#51504f"/><path d="M229 740 232 740 205 731 199 731z" fill="#51514f"/><path d="M232 740 236 740 213 731 205 731z" fill="#51504f"/><path d="M236 740 241 740 223 731 213 731z" fill="#50504e"/><path d="M241 740 247 740 235 731 223 731z" fill="#4f4f4d"/><path d="M247 740 253 740 247 731 235 731z" fill="#4e4e4c"/><path d="M253 740 260 740 260 731 247 731z" fill="#4d4c4b"/><path d="M260 740 267 740 273 731 260 731z" fill="#4b4a49"/><path d="M267 740 273 740 285 731 273 731z" fill="#494847"/><path d="M273 740 279 740 297 731 285 731z" fill="#484746"/><path d="M279 740 284 740 307 731 297 731z" fill="#464645"/><path d="M284 740 288 740 315 731 307 731z" fill="#464544"/><path d="M288 740 291 740 321 731 315 731z" fill="#454543"/><path d="M291 740 293 740 325 731 321 731z" fill="#444443"/><path d="M293 740 299 766 336 755 325 731z" fill="#444442"/><path d="M184 755 195 731 166 715 149 736z" fill="#585856"/><path d="M195 731 199 731 171 715 166 715z" fill="#5a5957"/><path d="M199 731 205 731 180 715 171 715z" fill="#5a5a58"/><path d="M205 731 213 731 192 715 180 715z" fill="#5a5a58"/><path d="M213 731 223 731 207 715 192 715z" fill="#595957"/><path d="M223 731 235 731 223 715 207 715z" fill="#585755"/><path d="M235 731 247 731 241 715 223 715z" fill="#555553"/><path d="M247 731 260 731 260 715 241 715z" fill="#535251"/><path d="M260 731 273 731 279 715 260 715z" fill="#504f4e"/><path d="M273 731 285 731 297 715 279 715z" fill="#4c4c4a"/><path d="M285 731 297 731 313 715 297 715z" fill="#494847"/><path d="M297 731 307 731 328 715 313 715z" fill="#464544"/><path d="M307 731 315 731 340 715 328 715z" fill="#444442"/><path d="M315 731 321 731 349 715 340 715z" fill="#434341"/><path d="M321 731 325 731 354 715 349 715z" fill="#424241"/><path d="M325 731 336 755 371 736 354 715z" fill="#424140"/><path d="M149 736 166 715 140 693 119 711z" fill="#5e5e5c"/><path d="M166 715 171 715 147 693 140 693z" fill="#60605e"/><path d="M171 715 180 715 158 693 147 693z" fill="#626260"/><path d="M180 715 192 715 173 693 158 693z" fill="#646361"/><path d="M192 715 207 715 192 693 173 693z" fill="#626260"/><path d="M207 715 223 715 213 693 192 693z" fill="#60605e"/><path d="M223 715 241 715 236 693 213 693z" fill="#5d5d5b"/><path d="M241 715 260 715 260 693 236 693z" fill="#595957"/><path d="M260 715 279 715 284 693 260 693z" fill="#555553"/><path d="M279 715 297 715 307 693 284 693z" fill="#51504f"/><path d="M297 715 313 715 328 693 307 693z" fill="#4c4c4a"/><path d="M313 715 328 715 347 693 328 693z" fill="#474746"/><path d="M328 715 340 715 362 693 347 693z" fill="#444342"/><path d="M340 715 349 715 373 693 362 693z" fill="#424241"/><path d="M349 715 354 715 380 693 373 693z" fill="#414140"/><path d="M354 715 371 736 401 711 380 693z" fill="#41403f"/><path d="M119 711 140 693 119 667 94 681z" fill="#61605e"/><path d="M140 693 147 693 127 667 119 667z" fill="#636361"/><path d="M147 693 158 693 140 667 127 667z" fill="#666563"/><path d="M158 693 173 693 158 667 140 667z" fill="#676765"/><path d="M173 693 192 693 180 667 158 667z" fill="#686866"/><path d="M192 693 213 693 205 667 180 667z" fill="#696866"/><path d="M213 693 236 693 232 667 205 667z" fill="#656563"/><path d="M236 693 260 693 260 667 232 667z" fill="#60605e"/><path d="M260 693 284 693 288 667 260 667z" fill="#5b5b59"/><path d="M284 693 307 693 315 667 288 667z" fill="#555553"/><path d="M307 693 328 693 340 667 315 667z" fill="#504f4e"/><path d="M328 693 347 693 362 667 340 667z" fill="#4a4a48"/><path d="M347 693 362 693 380 667 362 667z" fill="#454543"/><path d="M362 693 373 693 393 667 380 667z" fill="#434241"/><path d="M373 693 380 693 401 667 393 667z" fill="#414140"/><path d="M380 693 401 711 426 681 401 667z" fill="#41403f"/><path d="M94 681 119 667 103 637 76 647z" fill="#636260"/><path d="M119 667 127 667 112 637 103 637z" fill="#666563"/><path d="M127 667 140 667 127 637 112 637z" fill="#686866"/><path d="M140 667 158 667 147 637 127 637z" fill="#6a6a68"/><path d="M158 667 180 667 171 637 147 637z" fill="#6b6b69"/><path d="M180 667 205 667 199 637 171 637z" fill="#6c6b69"/><path d="M205 667 232 667 229 637 199 637z" fill="#6b6b69"/><path d="M232 667 260 667 260 637 229 637z" fill="#686765"/><path d="M260 667 288 667 291 637 260 637z" fill="#62615f"/><path d="M288 667 315 667 321 637 291 637z" fill="#5b5b59"/><path d="M315 667 340 667 349 637 321 637z" fill="#545452"/><path d="M340 667 362 667 373 637 349 637z" fill="#4e4e4c"/><path d="M362 667 380 667 393 637 373 637z" fill="#484746"/><path d="M380 667 393 667 408 637 393 637z" fill="#444442"/><path d="M393 667 401 667 417 637 408 637z" fill="#434241"/><path d="M401 667 426 681 444 647 417 637z" fill="#424240"/><path d="M76 647 103 637 93 604 65 609z" fill="#656462"/><path d="M103 637 112 637 103 604 93 604z" fill="#686865"/><path d="M112 637 127 637 119 604 103 604z" fill="#6b6a68"/><path d="M127 637 147 637 140 604 119 604z" fill="#6d6c6a"/><path d="M147 637 171 637 166 604 140 604z" fill="#6e6d6b"/><path d="M171 637 199 637 195 604 166 604z" fill="#6e6e6b"/><path d="M199 637 229 637 227 604 195 604z" fill="#6e6d6b"/><path d="M229 637 260 637 260 604 227 604z" fill="#6d6c6a"/><path d="M260 637 291 637 293 604 260 604z" fill="#686866"/><path d="M291 637 321 637 325 604 293 604z" fill="#61605f"/><path d="M321 637 349 637 354 604 325 604z" fill="#5a5957"/><path d="M349 637 373 637 380 604 354 604z" fill="#525250"/><path d="M373 637 393 637 401 604 380 604z" fill="#4c4b4a"/><path d="M393 637 408 637 417 604 401 604z" fill="#474645"/><path d="M408 637 417 637 427 604 417 604z" fill="#454543"/><path d="M417 637 444 647 455 609 427 604z" fill="#444443"/><path d="M65 609 93 604 90 570 61 570z" fill="#666664"/><path d="M93 604 103 604 100 570 90 570z" fill="#6a6967"/><path d="M103 604 119 604 116 570 100 570z" fill="#6c6c6a"/><path d="M119 604 140 604 137 570 116 570z" fill="#6e6e6b"/><path d="M140 604 166 604 164 570 137 570z" fill="#6f6f6d"/><path d="M166 604 195 604 194 570 164 570z" fill="#706f6d"/><path d="M195 604 227 604 226 570 194 570z" fill="#6f6f6d"/><path d="M227 604 260 604 260 570 226 570z" fill="#6e6e6c"/><path d="M260 604 293 604 294 570 260 570z" fill="#6c6c6a"/><path d="M293 604 325 604 326 570 294 570z" fill="#676765"/><path d="M325 604 354 604 356 570 326 570z" fill="#5f5f5d"/><path d="M354 604 380 604 383 570 356 570z" fill="#585756"/><path d="M380 604 401 604 404 570 383 570z" fill="#51504f"/><path d="M401 604 417 604 420 570 404 570z" fill="#4a4a48"/><path d="M417 604 427 604 430 570 420 570z" fill="#484847"/><path d="M427 604 455 609 459 570 430 570z" fill="#484746"/><path d="M61 570 90 570 93 537 65 532z" fill="#6a6a68"/><path d="M90 570 100 570 103 537 93 537z" fill="#6d6d6b"/><path d="M100 570 116 570 119 537 103 537z" fill="#70706e"/><path d="M116 570 137 570 140 537 119 537z" fill="#727170"/><path d="M137 570 164 570 166 537 140 537z" fill="#737371"/><path d="M164 570 194 570 195 537 166 537z" fill="#737371"/><path d="M194 570 226 570 227 537 195 537z" fill="#737371"/><path d="M226 570 260 570 260 537 227 537z" fill="#727270"/><path d="M260 570 294 570 293 537 260 537z" fill="#70706e"/><path d="M294 570 326 570 325 537 293 537z" fill="#6d6d6c"/><path d="M326 570 356 570 354 537 325 537z" fill="#686866"/><path d="M356 570 383 570 380 537 354 537z" fill="#60605f"/><path d="M383 570 404 570 401 537 380 537z" fill="#595958"/><path d="M404 570 420 570 417 537 401 537z" fill="#525251"/><path d="M420 570 430 570 427 537 417 537z" fill="#50504f"/><path d="M430 570 459 570 455 532 427 537z" fill="#4f4f4e"/><path d="M65 532 93 537 103 504 76 494z" fill="#70706f"/><path d="M93 537 103 537 112 504 103 504z" fill="#737372"/><path d="M103 537 119 537 127 504 112 504z" fill="#757674"/><path d="M119 537 140 537 147 504 127 504z" fill="#777776"/><path d="M140 537 166 537 171 504 147 504z" fill="#787877"/><path d="M166 537 195 537 199 504 171 504z" fill="#787977"/><path d="M195 537 227 537 229 504 199 504z" fill="#787877"/><path d="M227 537 260 537 260 504 229 504z" fill="#777776"/><path d="M260 537 293 537 291 504 260 504z" fill="#757675"/><path d="M293 537 325 537 321 504 291 504z" fill="#737472"/><path d="M325 537 354 537 349 504 321 504z" fill="#707170"/><path d="M354 537 380 537 373 504 349 504z" fill="#6c6d6c"/><path d="M380 537 401 537 393 504 373 504z" fill="#646665"/><path d="M401 537 417 537 408 504 393 504z" fill="#5e5f5f"/><path d="M417 537 427 537 417 504 408 504z" fill="#5b5c5c"/><path d="M427 537 455 532 444 494 417 504z" fill="#5a5b5b"/><path d="M76 494 103 504 119 474 94 460z" fill="#747675"/><path d="M103 504 112 504 127 474 119 474z" fill="#777878"/><path d="M112 504 127 504 140 474 127 474z" fill="#797a7a"/><path d="M127 504 147 504 158 474 140 474z" fill="#7a7c7b"/><path d="M147 504 171 504 180 474 158 474z" fill="#7b7d7c"/><path d="M171 504 199 504 205 474 180 474z" fill="#7c7d7c"/><path d="M199 504 229 504 232 474 205 474z" fill="#7b7d7c"/><path d="M229 504 260 504 260 474 232 474z" fill="#7b7c7b"/><path d="M260 504 291 504 288 474 260 474z" fill="#797a7a"/><path d="M291 504 321 504 315 474 288 474z" fill="#777878"/><path d="M321 504 349 504 340 474 315 474z" fill="#757676"/><path d="M349 504 373 504 362 474 340 474z" fill="#717373"/><path d="M373 504 393 504 380 474 362 474z" fill="#686e72"/><path d="M393 504 408 504 393 474 380 474z" fill="#626c72"/><path d="M408 504 417 504 401 474 393 474z" fill="#5f6b73"/><path d="M417 504 444 494 426 460 401 474z" fill="#5e6a73"/><path d="M94 460 119 474 140 448 119 430z" fill="#787a7a"/><path d="M119 474 127 474 147 448 140 448z" fill="#7a7c7c"/><path d="M127 474 140 474 158 448 147 448z" fill="#7c7e7e"/><path d="M140 474 158 474 173 448 158 448z" fill="#7d7f7f"/><path d="M158 474 180 474 192 448 173 448z" fill="#7e8080"/><path d="M180 474 205 474 213 448 192 448z" fill="#7e8080"/><path d="M205 474 232 474 236 448 213 448z" fill="#7e8080"/><path d="M232 474 260 474 260 448 236 448z" fill="#7d7f7f"/><path d="M260 474 288 474 284 448 260 448z" fill="#7c7e7e"/><path d="M288 474 315 474 307 448 284 448z" fill="#7a7c7c"/><path d="M315 474 340 474 328 448 307 448z" fill="#787a7a"/><path d="M340 474 362 474 347 448 328 448z" fill="#767878"/><path d="M362 474 380 474 362 448 347 448z" fill="#6f7476"/><path d="M380 474 393 474 373 448 362 448z" fill="#676f75"/><path d="M393 474 401 474 380 448 373 448z" fill="#626d74"/><path d="M401 474 426 460 401 430 380 448z" fill="#616d75"/><path d="M119 430 140 448 166 426 149 405z" fill="#7a7d7d"/><path d="M140 448 147 448 171 426 166 426z" fill="#7c7f7f"/><path d="M147 448 158 448 180 426 171 426z" fill="#7e8080"/><path d="M158 448 173 448 192 426 180 426z" fill="#7f8181"/><path d="M173 448 192 448 207 426 192 426z" fill="#7f8282"/><path d="M192 448 213 448 223 426 207 426z" fill="#7f8282"/><path d="M213 448 236 448 241 426 223 426z" fill="#7f8282"/><path d="M236 448 260 448 260 426 241 426z" fill="#7f8181"/><path d="M260 448 284 448 279 426 260 426z" fill="#7e8080"/><path d="M284 448 307 448 297 426 279 426z" fill="#7c7f7f"/><path d="M307 448 328 448 313 426 297 426z" fill="#7b7d7e"/><path d="M328 448 347 448 328 426 313 426z" fill="#797b7c"/><path d="M347 448 362 448 340 426 328 426z" fill="#76797a"/><path d="M362 448 373 448 349 426 340 426z" fill="#737678"/><path d="M373 448 380 448 354 426 349 426z" fill="#6e7376"/><path d="M380 448 401 430 371 405 354 426z" fill="#6b7175"/><path d="M149 405 166 426 195 410 184 386z" fill="#7c7f7f"/><path d="M166 426 171 426 199 410 195 410z" fill="#7d8081"/><path d="M171 426 180 426 205 410 199 410z" fill="#7e8182"/><path d="M180 426 192 426 213 410 205 410z" fill="#7f8282"/><path d="M192 426 207 426 223 410 213 410z" fill="#7f8283"/><path d="M207 426 223 426 235 410 223 410z" fill="#7f8283"/><path d="M223 426 241 426 247 410 235 410z" fill="#7f8283"/><path d="M241 426 260 426 260 410 247 410z" fill="#7f8282"/><path d="M260 426 279 426 273 410 260 410z" fill="#7e8182"/><path d="M279 426 297 426 285 410 273 410z" fill="#7d8081"/><path d="M297 426 313 426 297 410 285 410z" fill="#7c7f80"/><path d="M313 426 328 426 307 410 297 410z" fill="#7a7d7e"/><path d="M328 426 340 426 315 410 307 410z" fill="#797c7d"/><path d="M340 426 349 426 321 410 315 410z" fill="#777a7b"/><path d="M349 426 354 426 325 410 321 410z" fill="#75797a"/><path d="M354 426 371 405 336 386 325 410z" fill="#747778"/><path d="M184 386 195 410 227 401 221 375z" fill="#7c7f80"/><path d="M195 410 199 410 229 401 227 401z" fill="#7d8081"/><path d="M199 410 205 410 232 401 229 401z" fill="#7d8182"/><path d="M205 410 213 410 236 401 232 401z" fill="#7e8182"/><path d="M213 410 223 410 241 401 236 401z" fill="#7e8182"/><path d="M223 410 235 410 247 401 241 401z" fill="#7e8182"/><path d="M235 410 247 410 253 401 247 401z" fill="#7e8182"/><path d="M247 410 260 410 260 401 253 401z" fill="#7e8182"/><path d="M260 410 273 410 267 401 260 401z" fill="#7e8182"/><path d="M273 410 285 410 273 401 267 401z" fill="#7d8081"/><path d="M285 410 297 410 279 401 273 401z" fill="#7c7f80"/><path d="M297 410 307 410 284 401 279 401z" fill="#7b7e80"/><path d="M307 410 315 410 288 401 284 401z" fill="#7a7e7f"/><path d="M315 410 321 410 291 401 288 401z" fill="#797d7e"/><path d="M321 410 325 410 293 401 291 401z" fill="#787c7d"/><path d="M325 410 336 386 299 375 293 401z" fill="#777b7c"/><path d="M221 375 227 401 222 371 221 371z" fill="#7b7f80"/><path d="M227 401 229 401 224 371 222 371z" fill="#7b7f80"/><path d="M229 401 232 401 228 371 224 371z" fill="#7c7f80"/><path d="M232 401 236 401 233 371 228 371z" fill="#7c7f80"/><path d="M236 401 241 401 238 371 233 371z" fill="#7c7f81"/><path d="M241 401 247 401 245 371 238 371z" fill="#7c7f81"/><path d="M247 401 253 401 252 371 245 371z" fill="#7c7f81"/><path d="M253 401 260 401 260 371 252 371z" fill="#7c7f80"/><path d="M260 401 267 401 268 371 260 371z" fill="#7c7f80"/><path d="M267 401 273 401 275 371 268 371z" fill="#7c7f80"/><path d="M273 401 279 401 282 371 275 371z" fill="#7b7f80"/><path d="M279 401 284 401 287 371 282 371z" fill="#7b7e80"/><path d="M284 401 288 401 292 371 287 371z" fill="#7b7e7f"/><path d="M288 401 291 401 296 371 292 371z" fill="#7a7e7f"/><path d="M291 401 293 401 298 371 296 371z" fill="#7a7d7f"/><path d="M293 401 299 375 299 371 298 371z" fill="#7a7d7e"/></g></g>
</g>

<path d="M78 744.4H441" stroke="#1b1d20" stroke-width="1.6"/>
<!-- relationship dashed line -->
<path d="M260.2 580V735" stroke="#d8d8d8" stroke-width="1.3" stroke-dasharray="3 2.5"/>
<path d="M260.2 580V735" stroke="#1a1a1a" stroke-width="1.3" stroke-dasharray="2.5 3" stroke-dashoffset="2.7" opacity="0.7"/>
<!-- bone: ctrl_cog -->
<path d="M260 395 L242.5 552.5 L277.5 552.5 Z" fill="#aeaeae" stroke="#1e1e1e" stroke-width="1.1" stroke-linejoin="round"/>
<path d="M242.5 552.5 L260 570.5 L277.5 552.5 Z" fill="#878787" stroke="#1e1e1e" stroke-width="1.1" stroke-linejoin="round"/>
<!-- bone: ctrl_stretch-top -->
<path d="M260 310 L251.2 386.5 L268.8 386.5 Z" fill="#b2b2b2" stroke="#1e1e1e" stroke-width="1.1" stroke-linejoin="round"/>
<path d="M251.2 386.5 L260 395.4 L268.8 386.5 Z" fill="#8a8a8a" stroke="#1e1e1e" stroke-width="1.1"/>
<circle cx="260" cy="308.5" r="4.6" fill="url(#ball)" stroke="#1e1e1e" stroke-width="1.1"/>
<circle cx="260" cy="395.4" r="8.6" fill="url(#ball)" stroke="#1e1e1e" stroke-width="1.1"/>
<circle cx="260" cy="570.5" r="8.6" fill="url(#ball)" stroke="#1e1e1e" stroke-width="1.1"/>
<path d="M256 566.5l8 8M264 566.5l-8 8" stroke="#eee" stroke-width="0.9" opacity="0.8"/>
<path d="M257.5 393l5 5M262.5 393l-5 5" stroke="#eee" stroke-width="0.8" opacity="0.6"/>
<!-- bone axes labels -->
<path d="M238 395.4H251" stroke="#ddd" stroke-width="1"/><path d="M238.5 393v5" stroke="#ddd" stroke-width="1"/>
<text x="230" y="399" font-size="9" fill="#e0e0e0" font-family="Liberation Sans">z</text>
<path d="M215 570.5H251" stroke="#ddd" stroke-width="1"/><path d="M216 568v5" stroke="#ddd" stroke-width="0.8"/>
<text x="200" y="575.5" font-size="13" fill="#e0e0e0" font-family="Liberation Sans">Z</text>
<text x="255.5" y="695" font-size="11" fill="#e0e0e0" font-family="Liberation Sans">Z</text>
<!-- bone: ctrl_stretch-bottom (selected) -->
<path d="M260 831 L251.3 752.7 L268.7 752.7 Z" fill="#a8a8a8" stroke="#62a8ec" stroke-width="1.2" stroke-linejoin="round"/>
<path d="M251.3 752.7 L260 744 L268.7 752.7 Z" fill="#8e8e8e" stroke="#62a8ec" stroke-width="1.2"/>
<path d="M260 750V766" stroke="#555" stroke-width="1"/>
<circle cx="260" cy="831" r="4.6" fill="url(#ball)" stroke="#62a8ec" stroke-width="1.1"/>
<circle cx="260" cy="744.4" r="5" fill="none" stroke="#62a8ec" stroke-width="1.1"/>
<path d="M257 746.5h6v-3l-3-2.5-3 2.5z" fill="#58c45a"/>
<!-- 3d cursor -->
<circle cx="260.4" cy="744.4" r="11" fill="none" stroke="#e8e8e8" stroke-width="1.6"/>
<circle cx="260.4" cy="744.4" r="11" fill="none" stroke="#c43a3a" stroke-width="1.7" stroke-dasharray="4.3 4.3"/>
<!-- root axes -->
<path d="M285 744.4h4M302 744.4h3" stroke="#6aaee8" stroke-width="1.2"/>
<text x="309" y="749" font-size="11" fill="#e0e0e0" font-family="Liberation Sans">Y</text>
<!-- labels -->
<text x="270" y="353.3" font-size="13" fill="#f2f2f2" stroke="#f2f2f2" stroke-width="0.35" letter-spacing="0.2" font-family="Liberation Sans">ctrl_stretch-top</text>
<text x="270" y="484.3" font-size="13" fill="#f2f2f2" stroke="#f2f2f2" stroke-width="0.35" letter-spacing="0.2" font-family="Liberation Sans">ctrl_cog</text>
<text x="356" y="745.3" font-size="13" fill="#f2f2f2" stroke="#f2f2f2" stroke-width="0.35" letter-spacing="0.2" font-family="Liberation Sans">ctrl_root</text>
<text x="270" y="788.3" font-size="13" fill="#f2f2f2" stroke="#f2f2f2" stroke-width="0.35" letter-spacing="0.2" font-family="Liberation Sans">ctrl_stretch-bottom</text>
<!-- nav gizmo -->
<path d="M997 72V143M962 108H1032" stroke="none"/>
<path d="M997 81V99" stroke="#5f90d8" stroke-width="2.2"/>
<path d="M997 117V134" stroke="#5f90d8" stroke-width="2.2"/>
<path d="M971 108H988M1006 108H1023" stroke="#76c375" stroke-width="2.2"/>
<circle cx="961.8" cy="108" r="9" fill="#74b27a" stroke="#78c978" stroke-width="1"/>
<circle cx="997" cy="143" r="9" fill="#5a80bd" stroke="#6c9be0" stroke-width="1"/>
<circle cx="997" cy="72.3" r="9" fill="#5e8fd6"/>
<circle cx="1032" cy="108" r="9" fill="#76c375"/>
<circle cx="997" cy="108" r="9" fill="#b54f50"/>
<text x="997" y="76.6" font-size="12" font-weight="bold" fill="#1e1e1e" text-anchor="middle" font-family="Liberation Sans">Z</text>
<text x="997" y="112.4" font-size="12" font-weight="bold" fill="#1e1e1e" text-anchor="middle" font-family="Liberation Sans">X</text>
<text x="1032.5" y="112.4" font-size="12" font-weight="bold" fill="#1e1e1e" text-anchor="middle" font-family="Liberation Sans">Y</text>
<!-- side tab -->
<rect x="1043" y="70" width="14" height="15" rx="3" fill="#5a6a76"/>
<path d="M1050.5 73.5l-4 4 4 4" stroke="#c8c8c8" stroke-width="1.2" fill="none"/>
<!-- nav buttons -->
<g fill="#000" fill-opacity="0.2">
<circle cx="1027" cy="167.5" r="15"/><circle cx="1027" cy="200.5" r="15"/><circle cx="1027" cy="234" r="15"/><circle cx="1027" cy="267" r="15"/>
</g>
<g fill="#e8e8e8" stroke="#e8e8e8">
<circle cx="1029.5" cy="166" r="6" fill="#e8e8e8" stroke="none"/>
<path d="M1029.5 162.5v7M1026 166h7" stroke="#555" stroke-width="1"/>
<path d="M1018.5 177l6-6" stroke-width="2"/>
</g>
<g stroke="#e8e8e8" stroke-linecap="round" fill="none"><path d="M1024.3 203V194.5M1027.6 202V192.2M1030.9 202.5V193.2M1034 203.5V196" stroke-width="2.6"/><path d="M1018.6 201.5l4.2 4" stroke-width="2.6"/></g><path d="M1022.5 199.5h12.8v4.5c0 3.5-2.5 6-6 6h-1.5c-2.5 0-4-1-5.5-3z" fill="#e8e8e8"/>
<g fill="#e8e8e8"><circle cx="1023" cy="230" r="4"/><circle cx="1030" cy="229" r="4"/><rect x="1021" y="234" width="12" height="8" rx="1"/><path d="M1033 238l5-3.5v7z"/><rect x="1019" y="236" width="3" height="3"/></g>
<circle cx="1023" cy="230" r="1.2" fill="#555"/><circle cx="1030" cy="229" r="1.2" fill="#555"/>
<g stroke="#e8e8e8" stroke-width="1.3" fill="none"><rect x="1018.5" y="258.5" width="17" height="17"/><path d="M1024.2 258.5v17M1029.8 258.5v17M1018.5 264.2h17M1018.5 269.8h17"/></g>
</svg>
<!-- top-left buttons -->
<div class="btn" style="left:-6px;top:0.5px;width:25.5px"></div>
<svg width="30" height="22" style="left:0;top:0">
<path d="M-3 5.5c3-2 7-1 7 3.5s-4 5.5-6 5" stroke="#ddd" stroke-width="1.3" fill="none"/>
<circle cx="0" cy="15" r="1" fill="#ddd"/>
<path d="M9.5 10.5l3.5 3.5 3.5-3.5" stroke="#e0e0e0" stroke-width="1.2" fill="none"/>
</svg>
<div class="btn" style="left:25.3px;top:0.5px;width:56.4px"></div>
<div class="abs" style="left:25.3px;top:0.5px;width:21.4px;height:21px;background:#545454;border-radius:4px 0 0 4px"></div>
<svg width="90" height="22" style="left:0;top:0">
<path d="M30 8.5l5-4c3-2 8-1 8 4 0 3-2 5-5 8l-1.5-1.5c3-3 4-4 4-6.5 0-3-3-4-5-2.5l-4 3.5z" fill="none" stroke="#d8d8d8" stroke-width="1"/>
<path d="M50.7 10v8M64.3 10v8M57.3 11.5v6.5M50.7 14h13.6M53.5 12.5v3M60.5 12.5v3" stroke="#d8d8d8" stroke-width="1"/>
<rect x="61" y="3" width="4.5" height="4.5" fill="#f0f0f0"/>
<path d="M71 10.5l3.5 3.5 3.5-3.5" stroke="#e0e0e0" stroke-width="1.2" fill="none"/>
</svg>
<!-- top-right buttons -->
<div class="btn" style="left:738.3px;top:0.5px;width:34.4px"></div>
<div class="btn" style="left:778.3px;top:0.5px;width:43.2px"></div>
<div class="abs" style="left:778.3px;top:0.5px;width:20.7px;height:21px;background:#4772b3;border-radius:4px 0 0 4px"></div>
<div class="btn" style="left:827.3px;top:0.5px;width:78.2px"></div>
<div class="abs" style="left:827.3px;top:0.5px;width:20.9px;height:21px;background:#4772b3;border-radius:4px 0 0 4px"></div>
<div class="abs" style="left:869.5px;top:0.5px;width:1px;height:21px;background:#3a3a3a"></div>
<div class="abs" style="left:911.4px;top:0.5px;width:20.8px;height:21px;background:rgba(90,100,110,0.55);border-radius:4px;border:1px solid rgba(60,70,80,0.5)"></div>
<div class="btn" style="left:938px;top:0.5px;width:106.7px"></div>
<div class="abs" style="left:938px;top:0.5px;width:85.5px;height:21px;background:#565656;border-radius:4px 0 0 4px"></div>
<div class="abs" style="left:980.8px;top:0.5px;width:20.9px;height:21px;background:#4772b3"></div>
<div class="abs" style="left:959.6px;top:0.5px;width:1px;height:21px;background:#3d3d3d"></div>
<div class="abs" style="left:1001.7px;top:0.5px;width:1px;height:21px;background:#3d3d3d"></div>
<svg width="320" height="60" style="left:730px;top:0">
<!-- selectability eye + arrow -->
<path d="M14.8 7c2.6-3.6 9.4-3.6 12 0-2.6 3.6-9.4 3.6-12 0z" fill="none" stroke="#eee" stroke-width="1.5"/><circle cx="20.8" cy="7" r="2" fill="#eee"/>
<path d="M11.2 10.2l9.5 3.6-4.3 1.7-1.8 4.2z" fill="#eee"/>
<path d="M32 10.5l3.5 3.5 3.5-3.5" stroke="#e0e0e0" stroke-width="1.2" fill="none"/>
<!-- gizmo -->
<path d="M51.4 6.2A14 14 0 0 1 64.9 19" stroke="#eee" stroke-width="1.2" fill="none"/>
<path d="M54.8 14.6L66.2 4.2M61.8 3.8h4.8v4.8" stroke="#eee" stroke-width="1.2" fill="none"/>
<circle cx="53.4" cy="16" r="2" fill="#4772b3" stroke="#eee" stroke-width="1.1"/>
<path d="M76.5 10.5l3.5 3.5 3.5-3.5" stroke="#e0e0e0" stroke-width="1.2" fill="none"/>
<!-- overlays -->
<circle cx="107.5" cy="8.5" r="5.3" fill="#eee"/>
<path d="M101.5 9.5a6 6 0 0 0 9 8" stroke="#eee" stroke-width="1.2" fill="none"/>
<path d="M126 10.5l3.5 3.5 3.5-3.5" stroke="#e0e0e0" stroke-width="1.2" fill="none"/>
<!-- pose overlay icon -->
<rect x="143.8" y="4.2" width="3.8" height="3.8" fill="#eee"/>
<circle cx="153.3" cy="4.4" r="1.4" fill="none" stroke="#ddd" stroke-width="0.9"/>
<path d="M148.5 6.6h4.5M155 6.6h4.5M153.3 6v5.8c-1.5 1.5-3 3.5-3.8 6.2M153.3 11.8c1.5 1.5 3 3.5 3.8 6.2" stroke="#ddd" stroke-width="1" fill="none"/>
<path d="M166.5 10.5l3.5 3.5 3.5-3.5" stroke="#e0e0e0" stroke-width="1.2" fill="none"/>
<!-- xray icon -->
<rect x="185.5" y="6" width="9" height="9" fill="none" stroke="#9aa" stroke-width="1" opacity="0.8"/>
<rect x="188.5" y="3" width="9" height="9" fill="none" stroke="#9aa" stroke-width="1" opacity="0.8"/>
<!-- shading icons -->
<circle cx="219" cy="11" r="7" fill="none" stroke="#ddd" stroke-width="1.1"/>
<path d="M212 9h14M212 13h14M219 4v14" stroke="#ddd" stroke-width="1"/>
<circle cx="240" cy="11" r="7.3" fill="#cfcfcf"/>
<circle cx="261" cy="11" r="7.3" fill="#f0f0f0"/>
<path d="M261 11V3.7a7.3 7.3 0 0 1 7.3 7.3z" fill="#4772b3"/>
<path d="M254 13a7.5 7.5 0 0 0 14 0z" fill="#4772b3"/>
<circle cx="261" cy="11" r="7.3" fill="none" stroke="#f0f0f0" stroke-width="1"/>
<circle cx="282.5" cy="11" r="7.3" fill="none" stroke="#cfcfcf" stroke-width="1.1"/>
<path d="M278 8.5a4 4 0 0 1 4-3.5" stroke="#cfcfcf" stroke-width="1.3" fill="none"/>
<path d="M300 10.5l3.5 3.5 3.5-3.5" stroke="#e0e0e0" stroke-width="1.2" fill="none"/>
<!-- mirror -->
<path d="M173.5 32c-3.5-2-6-1-6 2 0 2 1.5 3 3.5 4-2 1-3.5 2-2.5 4 1 2 3.5 2 5 0M177.5 32c3.5-2 6-1 6 2 0 2-1.5 3-3.5 4 2 1 3.5 2 2.5 4-1 2-3.5 2-5 0" stroke="#bbb" stroke-width="0.9" fill="none"/>
<path d="M175.5 30v18" stroke="#eee" stroke-width="1" stroke-dasharray="2 1.5"/>
</svg>
<div class="abs" style="left:917px;top:28px;width:18.4px;height:21.4px;background:#545454;border-radius:4px;border:1px solid #3a3a3a"></div>
<div class="t" style="left:921.5px;top:33px;color:#eee;font-size:13px">X</div>
<div class="btn" style="left:941.3px;top:28px;width:103.4px;height:21.4px"></div>
<div class="t" style="left:950.4px;top:32.5px;color:#e8e8e8;font-size:13px;letter-spacing:-0.25px">Pose Options</div>
<svg width="12" height="10" style="left:1032.5px;top:35px"><path d="M1 2.5l4 4 4-4" stroke="#e0e0e0" stroke-width="1.2" fill="none"/></svg>

</div>
<div class="abs" style="left:1052px;top:0;width:3px;height:1069px;background:#161616"></div>
<div class="abs" style="left:1055px;top:0;width:445px;height:425px;background:#303030;border-radius:0 0 0 6px;overflow:hidden;will-change:transform">
<div class="abs" style="left:0;top:0;width:445px;height:25px;background:#474747"></div>
<div class="abs" style="left:0;top:25px;width:445px;height:23px;background:#333333"></div>
<div class="abs" style="left:0;top:48px;width:445px;height:22px;background:#383838"></div>
<div class="abs" style="left:0;top:70px;width:445px;height:22px;background:#676d76"></div>
<div class="abs" style="left:0;top:92px;width:445px;height:22px;background:#383838"></div>
<div class="abs" style="left:0;top:114px;width:445px;height:22px;background:#333333"></div>
<div class="abs" style="left:0;top:136px;width:445px;height:22px;background:#383838"></div>
<div class="abs" style="left:0;top:158px;width:445px;height:22px;background:#333333"></div>
<div class="abs" style="left:0;top:180px;width:445px;height:22px;background:#383838"></div>
<div class="abs" style="left:0;top:202px;width:445px;height:22px;background:#333333"></div>
<div class="abs" style="left:0;top:224px;width:445px;height:22px;background:#383838"></div>
<div class="abs" style="left:0;top:246px;width:445px;height:22px;background:#333333"></div>
<div class="abs" style="left:0;top:268px;width:445px;height:22px;background:#383838"></div>
<div class="abs" style="left:0;top:290px;width:445px;height:22px;background:#333333"></div>
<div class="abs" style="left:0;top:312px;width:445px;height:22px;background:#383838"></div>
<div class="abs" style="left:0;top:334px;width:445px;height:22px;background:#333333"></div>
<div class="abs" style="left:0;top:356px;width:445px;height:22px;background:#3a5791"></div>
<div class="abs" style="left:0;top:378px;width:445px;height:22px;background:#333333"></div>
<div class="abs" style="left:0;top:400px;width:445px;height:22px;background:#383838"></div>
<div class="abs" style="left:0;top:421px;width:445px;height:4px;background:#333333"></div>
<div class="abs" style="left:32px;top:75px;width:1px;height:350px;background:#6a655c"></div>
<svg width="3" height="330" style="left:54px;top:100px"><path d="M0.5 0V330" stroke="#6f6a60" stroke-width="1" stroke-dasharray="3 4"/></svg>
<svg width="16" height="16" style="left:25px;top:29px"><use href="#i-coll"/></svg>
<div class="t" style="left:48px;top:30.7px;color:#d2d2d2">Scene Collection</div>
<svg width="10" height="10" style="left:29.5px;top:54px"><path d="M0 2.5h7l-3.5 6z" fill="#c8c8c8"/></svg>
<div class="abs" style="left:44.5px;top:49px;width:22px;height:20px;border-radius:5px;background:#57534d;border:1px solid #6a665e"></div>
<svg width="16" height="16" style="left:47px;top:51px"><use href="#i-coll"/></svg>
<div class="t" style="left:70px;top:52.7px;color:#d2d2d2">Collection</div>
<svg width="10" height="10" style="left:51.5px;top:76px"><path d="M0 2.5h7l-3.5 6z" fill="#c8c8c8"/></svg>
<div class="abs" style="left:66.5px;top:71px;width:22px;height:20px;border-radius:5px;background:rgba(255,255,255,0.08);border:1px solid #80868d"></div>
<svg width="16" height="16" style="left:69px;top:73px"><use href="#i-arm"/></svg>
<div class="t" style="left:92px;top:74.7px;color:#d0c0b0">Armature</div>
<svg width="10" height="10" style="left:73.5px;top:98px"><path d="M0 2.5h7l-3.5 6z" fill="#c8c8c8"/></svg>
<div class="abs" style="left:88.5px;top:93px;width:22px;height:20px;border-radius:5px;background:#57534d;border:1px solid #6a665e"></div>
<svg width="16" height="16" style="left:91px;top:95px"><use href="#i-pose"/></svg>
<div class="t" style="left:114px;top:96.7px;color:#d2d2d2">Pose</div>
<svg width="10" height="10" style="left:95.5px;top:120px"><path d="M0 2.5h7l-3.5 6z" fill="#c8c8c8"/></svg>
<svg width="16" height="16" style="left:113px;top:117px"><use href="#i-bone"/></svg>
<div class="t" style="left:136px;top:118.7px;color:#d2d2d2">root</div>
<svg width="10" height="10" style="left:118.5px;top:142px"><path d="M0 1.5v7l6-3.5z" fill="#c8c8c8"/></svg>
<svg width="16" height="16" style="left:135px;top:139px"><use href="#i-bone"/></svg>
<div class="t" style="left:158px;top:140.7px;color:#d2d2d2">def_body</div>
<svg width="10" height="10" style="left:117.5px;top:164px"><path d="M0 2.5h7l-3.5 6z" fill="#c8c8c8"/></svg>
<svg width="16" height="16" style="left:135px;top:161px"><use href="#i-bone"/></svg>
<div class="t" style="left:158px;top:162.7px;color:#d2d2d2">tgt_cog</div>
<svg width="16" height="16" style="left:157px;top:183px"><use href="#i-bone"/></svg>
<div class="t" style="left:180px;top:184.7px;color:#d2d2d2">tgt_stretch-top</div>
<svg width="10" height="10" style="left:139.5px;top:208px"><path d="M0 2.5h7l-3.5 6z" fill="#c8c8c8"/></svg>
<svg width="16" height="16" style="left:157px;top:205px"><use href="#i-bone"/></svg>
<div class="t" style="left:180px;top:206.7px;color:#d2d2d2">tgt_stretch-bottom</div>
<svg width="10" height="10" style="left:161.5px;top:230px"><path d="M0 2.5h7l-3.5 6z" fill="#c8c8c8"/></svg>
<svg width="16" height="16" style="left:179px;top:227px"><use href="#i-bone"/></svg>
<div class="t" style="left:202px;top:228.7px;color:#d2d2d2">mch_stretch</div>
<svg width="10" height="10" style="left:184.5px;top:252px"><path d="M0 1.5v7l6-3.5z" fill="#c8c8c8"/></svg>
<svg width="16" height="16" style="left:201px;top:249px"><use href="#i-con"/></svg>
<div class="t" style="left:224px;top:250.7px;color:#d2d2d2">Constraints</div>
<svg width="16" height="16" style="left:201px;top:271px"><use href="#i-bone"/></svg>
<div class="t" style="left:224px;top:272.7px;color:#d2d2d2">tgt_body</div>
<svg width="10" height="10" style="left:95.5px;top:296px"><path d="M0 2.5h7l-3.5 6z" fill="#c8c8c8"/></svg>
<svg width="16" height="16" style="left:113px;top:293px"><use href="#i-bone"/></svg>
<div class="t" style="left:136px;top:294.7px;color:#d2d2d2">ctrl_root</div>
<svg width="10" height="10" style="left:117.5px;top:318px"><path d="M0 2.5h7l-3.5 6z" fill="#c8c8c8"/></svg>
<svg width="16" height="16" style="left:135px;top:315px"><use href="#i-bone"/></svg>
<div class="t" style="left:158px;top:316.7px;color:#d2d2d2">ctrl_cog</div>
<svg width="16" height="16" style="left:157px;top:337px"><use href="#i-bone"/></svg>
<div class="t" style="left:180px;top:338.7px;color:#d2d2d2">ctrl_stretch-top</div>
<div class="abs" style="left:154.5px;top:357px;width:22px;height:20px;border-radius:5px;background:#5a6e86;border:1px solid #6d7f94"></div>
<svg width="16" height="16" style="left:157px;top:359px"><use href="#i-bone"/></svg>
<div class="t" style="left:180px;top:360.7px;color:#e8e8e8">ctrl_stretch-bottom</div>
<svg width="10" height="10" style="left:73.5px;top:384px"><path d="M0 2.5h7l-3.5 6z" fill="#c8c8c8"/></svg>
<svg width="16" height="16" style="left:91px;top:381px"><use href="#i-armdata"/></svg>
<div class="t" style="left:114px;top:382.7px;color:#d2d2d2">Armature</div>
<svg width="10" height="10" style="left:96.5px;top:406px"><path d="M0 1.5v7l6-3.5z" fill="#c8c8c8"/></svg>
<svg width="16" height="16" style="left:113px;top:403px"><use href="#i-bonecoll"/></svg>
<div class="t" style="left:136px;top:404.7px;color:#d2d2d2">Bone Collections</div>
<svg width="16" height="16" style="left:237px;top:139px"><use href="#i-con"/></svg>
<svg width="16" height="16" style="left:315px;top:249px"><use href="#i-pencil"/></svg>
<div class="abs" style="left:254.3px;top:401px;width:22px;height:20px;border-radius:5px;background:#3b4650;border:1px solid #5a7080"></div>
<svg width="16" height="16" style="left:257.5px;top:403px"><use href="#i-bonecoll"/></svg>
<div class="t" style="left:272.5px;top:406.5px;color:#e0e0e0;font-size:12px;line-height:12px">5</div>
<svg width="16" height="16" style="left:398px;top:51px"><use href="#i-eye"/></svg>
<svg width="16" height="16" style="left:420px;top:51px"><use href="#i-cam"/></svg>
<svg width="16" height="16" style="left:398px;top:73px"><use href="#i-eye"/></svg>
<svg width="16" height="16" style="left:420px;top:73px"><use href="#i-cam"/></svg>
<svg width="16" height="16" style="left:377px;top:51px"><rect x="2" y="2" width="12" height="12" rx="1.5" fill="#e6e6e6"/><path d="M4.5 8l2.5 2.5 5-5" stroke="#222" stroke-width="2" fill="none"/></svg>
<svg width="20" height="20" style="left:2px;top:72px"><use href="#i-posemode"/></svg>
<div class="abs" style="left:9px;top:1px;width:33px;height:21px;background:#2a2a2a;border-radius:4px"></div>
<svg width="34" height="22" style="left:9px;top:1px"><rect x="3.5" y="3" width="4" height="2.5" fill="#eee"/><path d="M5 5.5v10h4" stroke="#ccc" stroke-width="1" fill="none"/><rect x="11" y="9" width="7" height="3" fill="#eee"/><rect x="11" y="14" width="7" height="3" fill="#eee"/><path d="M21.5 10.5l3 3 3-3" stroke="#e0e0e0" stroke-width="1.2" fill="none"/></svg>
<div class="abs" style="left:48.8px;top:1px;width:33.2px;height:21px;background:#2a2a2a;border-radius:4px"></div>
<svg width="34" height="22" style="left:48.8px;top:1px"><path d="M4 7v10h9" stroke="#aaa" stroke-width="1" fill="none"/><path d="M5.5 5.5v10h9" stroke="#ccc" stroke-width="1" fill="none"/><rect x="7.5" y="3.5" width="9" height="9" fill="#eee" stroke="#eee"/><path d="M8 12l3-5 2 3 1-1 2 3z" fill="#333"/><path d="M21.5 10.5l3 3 3-3" stroke="#e0e0e0" stroke-width="1.2" fill="none"/></svg>
<div class="abs" style="left:151px;top:1px;width:125px;height:20px;background:#1d1d1f;border-radius:2px"></div>
<svg width="20" height="20" style="left:158px;top:1px"><circle cx="10.5" cy="8" r="5" fill="none" stroke="#ddd" stroke-width="1.3"/><path d="M7 11.5l-4.5 4.5" stroke="#ddd" stroke-width="1.3"/></svg>
<div class="abs" style="left:380px;top:1px;width:33px;height:21px;background:#2a2a2a;border-radius:4px"></div>
<svg width="34" height="22" style="left:380px;top:1px"><path d="M4 4h12l-5 6.5v7.5l-2-1.5v-6z" fill="none" stroke="#e6e6e6" stroke-width="1.2" stroke-linejoin="round"/><path d="M21.5 10.5l3 3 3-3" stroke="#e0e0e0" stroke-width="1.2" fill="none"/></svg>
<div class="abs" style="left:419px;top:1px;width:21px;height:21px;background:#3d3d3d;border-radius:4px;border:1px solid #555"></div>
<svg width="22" height="22" style="left:419px;top:1px"><rect x="5" y="7" width="10" height="3" fill="none" stroke="#aaa" stroke-width="1"/><rect x="6" y="10" width="8" height="7" fill="none" stroke="#aaa" stroke-width="1"/><circle cx="15" cy="6" r="3.5" fill="#eee"/><path d="M15 4v4M13 6h4" stroke="#333" stroke-width="1"/></svg>
<div class="abs" style="left:442.6px;top:36px;width:3px;height:316px;background:#4a4a4a;border-radius:1.5px"></div>
</div>
<div class="abs" style="left:1055px;top:428px;width:445px;height:641px;background:#424242;border-radius:6px 0 0 0;overflow:hidden;will-change:transform">
<div class="abs" style="left:0.0px;top:0.0px;width:445.0px;height:27.0px;background:#474747;"></div>
<div class="abs" style="left:9.3px;top:3.0px;width:32.4px;height:19.7px;background:#2a2a2a;border-radius:4px"></div>
<svg width="33" height="20" viewBox="0 0 33 20" style="left:9.3px;top:3.0px"><rect x="4.5" y="3.5" width="12" height="5.5" rx="2.75" fill="#eee"/><rect x="4.5" y="10.5" width="12" height="5.5" rx="2.75" fill="#eee"/><circle cx="13.5" cy="6.2" r="1.8" fill="#2a2a2a"/><circle cx="13.5" cy="13.3" r="1.8" fill="#2a2a2a"/><path d="M20.5 8l3 3 3-3" stroke="#e0e0e0" stroke-width="1.2" fill="none"/></svg>
<div class="abs" style="left:163.8px;top:3.0px;width:125.2px;height:20.0px;background:#1d1d1f;border-radius:2px"></div>
<svg width="20" height="20" viewBox="0 0 20 20" style="left:169.0px;top:3.0px"><circle cx="11" cy="8" r="5" fill="none" stroke="#ddd" stroke-width="1.3"/><path d="M7.5 11.5l-4.5 4.5" stroke="#ddd" stroke-width="1.3"/></svg>
<div class="abs" style="left:420.0px;top:3.0px;width:20.0px;height:20.0px;background:#2a2a2a;border-radius:4px"></div>
<svg width="10" height="10" viewBox="0 0 10 10" style="left:425.0px;top:8.0px"><path d="M1.5 3l3.5 3.5 3.5-3.5" stroke="#e0e0e0" stroke-width="1.2" fill="none"/></svg>
<div class="abs" style="left:0.0px;top:27.0px;width:30.0px;height:614.0px;background:#232528;"></div>
<div class="abs" style="left:1.7px;top:35.5px;width:28.3px;height:29.5px;background:#2c2c2c;border-radius:4px 0 0 4px"></div>
<div class="abs" style="left:1.7px;top:73.0px;width:28.3px;height:29.5px;background:#2c2c2c;border-radius:4px 0 0 4px"></div>
<div class="abs" style="left:1.7px;top:103.2px;width:28.3px;height:29.5px;background:#2c2c2c;border-radius:4px 0 0 4px"></div>
<div class="abs" style="left:1.7px;top:133.4px;width:28.3px;height:29.5px;background:#2c2c2c;border-radius:4px 0 0 4px"></div>
<div class="abs" style="left:1.7px;top:163.5px;width:28.3px;height:29.5px;background:#2c2c2c;border-radius:4px 0 0 4px"></div>
<div class="abs" style="left:1.7px;top:193.6px;width:28.3px;height:29.5px;background:#2c2c2c;border-radius:4px 0 0 4px"></div>
<div class="abs" style="left:1.7px;top:230.7px;width:28.3px;height:29.5px;background:#2c2c2c;border-radius:4px 0 0 4px"></div>
<div class="abs" style="left:1.7px;top:269.6px;width:28.3px;height:29.5px;background:#2c2c2c;border-radius:4px 0 0 4px"></div>
<div class="abs" style="left:1.7px;top:299.7px;width:28.3px;height:29.5px;background:#2c2c2c;border-radius:4px 0 0 4px"></div>
<div class="abs" style="left:1.7px;top:329.8px;width:28.3px;height:29.5px;background:#2c2c2c;border-radius:4px 0 0 4px"></div>
<div class="abs" style="left:1.7px;top:360.0px;width:28.3px;height:29.5px;background:#424242;border-radius:4px 0 0 4px"></div>
<div class="abs" style="left:1.7px;top:390.0px;width:28.3px;height:29.5px;background:#2c2c2c;border-radius:4px 0 0 4px"></div>
<div class="abs" style="left:1.7px;top:420.0px;width:28.3px;height:29.5px;background:#2c2c2c;border-radius:4px 0 0 4px"></div>
<div class="abs" style="left:1.7px;top:458.0px;width:28.3px;height:29.5px;background:#2c2c2c;border-radius:4px 0 0 4px"></div>
<svg width="18" height="18" viewBox="0 0 18 18" style="left:6.2px;top:41.3px"><g transform="scale(1.125)"><path d="M5 2v6" stroke="#ddd" stroke-width="1.2"/><circle cx="5" cy="11" r="2.6" fill="#ddd"/><path d="M11 2.5c-2 1-2 4 0 5v7.5h2v-7.5c2-1 2-4 0-5v3h-2z" fill="#ddd"/></g></svg>
<svg width="18" height="18" viewBox="0 0 18 18" style="left:6.2px;top:78.8px"><g transform="scale(1.125)"><rect x="2" y="5" width="12" height="9" rx="1" fill="#ddd"/><rect x="5" y="3" width="4" height="2" fill="#ddd"/><path d="M4 7.5h6M4 9.5h6M4 11.5h6" stroke="#555" stroke-width="1"/><rect x="11.5" y="7" width="1.5" height="1.5" fill="#555"/></g></svg>
<svg width="18" height="18" viewBox="0 0 18 18" style="left:6.2px;top:109.0px"><g transform="scale(1.125)"><rect x="2" y="2" width="12" height="4" rx="1" fill="#ddd"/><rect x="4" y="6" width="8" height="8" fill="#ddd"/><path d="M5 13l3-4 3 4z" fill="#555"/></g></svg>
<svg width="18" height="18" viewBox="0 0 18 18" style="left:6.2px;top:139.2px"><g transform="scale(1.125)"><path d="M2 5v10h10" stroke="#999" stroke-width="1" fill="none"/><path d="M3.5 3.5v10h10" stroke="#bbb" stroke-width="1" fill="none"/><rect x="5.5" y="1.5" width="9" height="9" fill="none" stroke="#ddd" stroke-width="1.1"/><path d="M6 10l3-5 2.5 3.5 1-1 2 2.5z" fill="#ddd"/></g></svg>
<svg width="18" height="18" viewBox="0 0 18 18" style="left:6.2px;top:169.3px"><g transform="scale(1.125)"><path d="M5 2l-4 9h7z" fill="#ddd"/><circle cx="10" cy="11" r="3.5" fill="#2c2c2c" stroke="#ddd" stroke-width="1.1"/><circle cx="12.5" cy="3.5" r="1.8" fill="#ddd"/></g></svg>
<svg width="18" height="18" viewBox="0 0 18 18" style="left:6.2px;top:199.4px"><g transform="scale(1.125)"><circle cx="8" cy="8" r="6" fill="none" stroke="#c85454" stroke-width="1.4"/><path d="M4 6c2-1 3 1 4 3s-1 3 1 4M9 3c0 2 2 2 3 4" stroke="#c85454" stroke-width="1.6" fill="none"/><path d="M2 14L14 2" stroke="#c85454" stroke-width="0.8"/></g></svg>
<svg width="18" height="18" viewBox="0 0 18 18" style="left:6.2px;top:236.5px"><g transform="scale(1.125)"><rect x="2" y="2" width="12" height="3.2" fill="none" stroke="#ddd" stroke-width="1.1"/><path d="M3 5.5v8.5h10V5.5" fill="none" stroke="#ddd" stroke-width="1.1"/><rect x="6.5" y="7.3" width="3" height="1.2" fill="#ddd"/></g></svg>
<svg width="18" height="18" viewBox="0 0 18 18" style="left:6.2px;top:275.4px"><g transform="scale(1.125)"><path d="M2 5V2h3M11 2h3v3M14 11v3h-3M5 14H2v-3" stroke="#999" stroke-width="1.1" fill="none"/><rect x="4" y="4" width="8" height="8" fill="#c85050"/></g></svg>
<svg width="18" height="18" viewBox="0 0 18 18" style="left:6.2px;top:305.5px"><g transform="scale(1.125)"><circle cx="8" cy="9" r="5.5" fill="none" stroke="#6aa8e8" stroke-width="1.2" stroke-dasharray="24 6"/><circle cx="8" cy="9" r="2.6" fill="#6aa8e8"/><circle cx="13" cy="4" r="1.8" fill="#6aa8e8"/></g></svg>
<svg width="18" height="18" viewBox="0 0 18 18" style="left:6.2px;top:335.6px"><g transform="scale(1.125)"><path d="M6.3 15.2A5.2 5.2 0 0 1 2.3 7.2L10.2 1.9C12.6 0.6 15.2 2.5 14.3 5.2L11.2 12.2A5.2 5.2 0 0 1 6.3 15.2z" fill="none" stroke="#6aa8e8" stroke-width="1.1"/><circle cx="6.4" cy="10" r="2.6" fill="none" stroke="#6aa8e8" stroke-width="1.7"/><circle cx="11.8" cy="4.5" r="0.9" fill="#6aa8e8"/></g></svg>
<svg width="18" height="18" viewBox="0 0 18 18" style="left:6.2px;top:365.8px"><g transform="scale(1.125)"><g fill="none" stroke="#6fd07a" stroke-width="1.1" stroke-linecap="round"><path d="M1 2.5l3 2.5h4.5l3 1.5 2 2M8 5v5l-4 5M8 10l3 3h3"/></g><circle cx="9" cy="2.8" r="1.4" fill="#6fd07a"/></g></svg>
<svg width="18" height="18" viewBox="0 0 18 18" style="left:6.2px;top:395.8px"><g transform="scale(1.125)"><g fill="#6cc36e"><circle cx="3.2" cy="5.3" r="2.2"/><circle cx="5.4" cy="2.9" r="2.2"/><circle cx="10.8" cy="13.1" r="2.2"/><circle cx="13.2" cy="10.7" r="2.2"/><path d="M3.5 5.5l2-2 7.5 7.5-2 2z"/></g></g></svg>
<svg width="18" height="18" viewBox="0 0 18 18" style="left:6.2px;top:425.8px"><g transform="scale(1.125)"><path d="M4 12c-2-2-1.5-4 0.5-6.5l4-4c2-1.5 5-1 5 2 0 1-0.5 2-1.5 3" fill="none" stroke="#6aa8e8" stroke-width="1.1"/><g fill="#6aa8e8"><circle cx="4" cy="4.5" r="1.5"/><circle cx="11" cy="13" r="1.8"/><circle cx="13" cy="11" r="1.8"/><path d="M5 6l1.5-1.5 6 6-1.5 1.5z"/></g></g></svg>
<svg width="18" height="18" viewBox="0 0 18 18" style="left:6.2px;top:463.8px"><g transform="scale(1.125)"><rect x="2" y="2" width="12" height="12" fill="#c85050"/><rect x="2" y="5" width="3" height="3" fill="#1f1f1f"/><rect x="2" y="11" width="3" height="3" fill="#1f1f1f"/><rect x="5" y="2" width="3" height="3" fill="#1f1f1f"/><rect x="5" y="8" width="3" height="3" fill="#1f1f1f"/><rect x="8" y="5" width="3" height="3" fill="#1f1f1f"/><rect x="8" y="11" width="3" height="3" fill="#1f1f1f"/><rect x="11" y="2" width="3" height="3" fill="#1f1f1f"/><rect x="11" y="8" width="3" height="3" fill="#1f1f1f"/></g></svg>
<svg width="17" height="17" viewBox="0 0 17 17" style="left:40.8px;top:38.0px"><path d="M1 5V1h4M12 1h4v4M16 12v4h-4M5 16H1v-4" stroke="#aaa" stroke-width="1.2" fill="none"/><rect x="4" y="4" width="9" height="9" fill="#e6e6e6"/></svg>
<div class="t" style="left:67.5px;top:38.8px;color:#d8d8d8;font-size:13px;line-height:13px;letter-spacing:-0.2px">Armature</div>
<svg width="10" height="12" viewBox="0 0 10 12" style="left:137.0px;top:40.0px"><path d="M2 1.5l5 4.5-5 4.5" stroke="#ccc" stroke-width="1.2" fill="none"/></svg>
<svg width="17" height="17" viewBox="0 0 17 17" style="left:155.0px;top:38.0px"><g fill="none" stroke="#e6e6e6" stroke-width="1.2" stroke-linecap="round"><path d="M1 2l3 2.5h4.5l3 1.5 2 2.5M8 4.5v5.5l-4 5M8 10l3 3h3"/></g><circle cx="9" cy="2.6" r="1.5" fill="#e6e6e6"/></svg>
<div class="t" style="left:181.0px;top:38.8px;color:#d8d8d8;font-size:13px;line-height:13px;letter-spacing:-0.2px">Armature</div>
<svg width="16" height="16" viewBox="0 0 16 16" style="left:423.0px;top:38.0px"><path d="M1.5 14.5l5-5" stroke="#bbb" stroke-width="1.1"/><path d="M6 5.5l4.5 4.5M8 3.5l4.5 4.5 1.5-1.5-4.5-4.5z M5 6l1.5-2 6 6-2 1.5z" fill="none" stroke="#bbb" stroke-width="1.1" stroke-linejoin="round"/></svg>
<div class="abs" style="left:39.0px;top:74.0px;width:33.5px;height:20.0px;background:#2a2a2a;border-radius:4px 0 0 4px"></div>
<svg width="30" height="18" viewBox="0 0 30 18" style="left:42.0px;top:75.0px"><g fill="none" stroke="#e6e6e6" stroke-width="1.2" stroke-linecap="round"><path d="M2 2.5l3 2.5h4.5l3 1.5 2 2.5M9 5v5l-4 5.5M9 10l3 3h3"/></g><circle cx="10" cy="2.8" r="1.5" fill="#e6e6e6"/><path d="M20 8l3 3 3-3" stroke="#e0e0e0" stroke-width="1.2" fill="none"/></svg>
<div class="abs" style="left:73.5px;top:74.0px;width:345.9px;height:20.0px;background:#1d1d1f;"></div>
<div class="t" style="left:81.0px;top:76.7px;color:#e6e6e6;font-size:13px;line-height:13px;letter-spacing:-0.2px">Armature</div>
<div class="abs" style="left:419.4px;top:74.0px;width:21.6px;height:20.0px;background:#545454;border-radius:0 4px 4px 0"></div>
<svg width="16" height="16" viewBox="0 0 16 16" style="left:423.0px;top:76.0px"><path d="M8 1.5l6 2.5v4c0 3.5-3 6-6 7-3-1-6-3.5-6-7v-4z" fill="none" stroke="#ddd" stroke-width="1.1"/></svg>
<svg width="12" height="10" viewBox="0 0 12 10" style="left:46.0px;top:113.3px"><path d="M1.5 2.5l4.5 4.5 4.5-4.5" stroke="#bbb" stroke-width="1.1" fill="none"/></svg>
<div class="t" style="left:62.0px;top:112.5px;color:#d6d6d6;font-size:13px;line-height:13px;">Pose</div>
<svg width="13" height="7" viewBox="0 0 13 7" style="left:421.0px;top:116.0px"><rect x="0" y="1.2" width="1.2" height="1.2" fill="#161616"/><rect x="0" y="4.2" width="1.2" height="1.2" fill="#161616"/><rect x="3" y="1.2" width="1.2" height="1.2" fill="#161616"/><rect x="3" y="4.2" width="1.2" height="1.2" fill="#161616"/><rect x="6" y="1.2" width="1.2" height="1.2" fill="#161616"/><rect x="6" y="4.2" width="1.2" height="1.2" fill="#161616"/><rect x="9" y="1.2" width="1.2" height="1.2" fill="#161616"/><rect x="9" y="4.2" width="1.2" height="1.2" fill="#161616"/><rect x="0" y="0" width="1.2" height="1.2" fill="#b4b4b4"/><rect x="0" y="3" width="1.2" height="1.2" fill="#b4b4b4"/><rect x="3" y="0" width="1.2" height="1.2" fill="#b4b4b4"/><rect x="3" y="3" width="1.2" height="1.2" fill="#b4b4b4"/><rect x="6" y="0" width="1.2" height="1.2" fill="#b4b4b4"/><rect x="6" y="3" width="1.2" height="1.2" fill="#b4b4b4"/><rect x="9" y="0" width="1.2" height="1.2" fill="#b4b4b4"/><rect x="9" y="3" width="1.2" height="1.2" fill="#b4b4b4"/></svg>
<div class="abs" style="left:38.0px;top:132.0px;width:401.8px;height:37.5px;background:#383838;border-radius:0 0 4px 4px"></div>
<div class="abs" style="left:47.0px;top:141.0px;width:191.0px;height:19.6px;background:#4f78b8;border-radius:4px 0 0 4px"></div>
<div class="abs" style="left:238.5px;top:141.0px;width:192.5px;height:19.6px;background:#595959;border-radius:0 4px 4px 0"></div>
<div class="t" style="left:47.0px;top:143.5px;width:191.0px;text-align:center;color:#f0f0f0;font-size:13px;line-height:13px;letter-spacing:-0.25px">Pose Position</div>
<div class="t" style="left:238.5px;top:143.5px;width:192.5px;text-align:center;color:#e6e6e6;font-size:13px;line-height:13px;letter-spacing:-0.1px">Rest Position</div>
<svg width="12" height="10" viewBox="0 0 12 10" style="left:46.0px;top:180.3px"><path d="M1.5 2.5l4.5 4.5 4.5-4.5" stroke="#bbb" stroke-width="1.1" fill="none"/></svg>
<div class="t" style="left:62.4px;top:179.5px;color:#d6d6d6;font-size:13px;line-height:13px;letter-spacing:0.5px">Bone Collections</div>
<svg width="13" height="7" viewBox="0 0 13 7" style="left:421.0px;top:183.0px"><rect x="0" y="1.2" width="1.2" height="1.2" fill="#161616"/><rect x="0" y="4.2" width="1.2" height="1.2" fill="#161616"/><rect x="3" y="1.2" width="1.2" height="1.2" fill="#161616"/><rect x="3" y="4.2" width="1.2" height="1.2" fill="#161616"/><rect x="6" y="1.2" width="1.2" height="1.2" fill="#161616"/><rect x="6" y="4.2" width="1.2" height="1.2" fill="#161616"/><rect x="9" y="1.2" width="1.2" height="1.2" fill="#161616"/><rect x="9" y="4.2" width="1.2" height="1.2" fill="#161616"/><rect x="0" y="0" width="1.2" height="1.2" fill="#b4b4b4"/><rect x="0" y="3" width="1.2" height="1.2" fill="#b4b4b4"/><rect x="3" y="0" width="1.2" height="1.2" fill="#b4b4b4"/><rect x="3" y="3" width="1.2" height="1.2" fill="#b4b4b4"/><rect x="6" y="0" width="1.2" height="1.2" fill="#b4b4b4"/><rect x="6" y="3" width="1.2" height="1.2" fill="#b4b4b4"/><rect x="9" y="0" width="1.2" height="1.2" fill="#b4b4b4"/><rect x="9" y="3" width="1.2" height="1.2" fill="#b4b4b4"/></svg>
<div class="abs" style="left:38.0px;top:199.0px;width:401.8px;height:293.5px;background:#383838;border-radius:0 0 5px 5px"></div>
<div class="abs" style="left:46.0px;top:207.0px;width:356.0px;height:174.0px;background:#2a2a2a;border-radius:4px;border:1px solid #404040"></div>
<svg width="18" height="8" viewBox="0 0 18 8" style="left:377.0px;top:218.0px"><path d="M2 1.5c3.5 5 10.5 5 14 0" stroke="#bbb" stroke-width="1.1" fill="none"/></svg>
<div class="t" style="left:80.0px;top:215.6px;color:#d6d6d6;font-size:13px;line-height:13px;">root</div>
<svg width="18" height="8" viewBox="0 0 18 8" style="left:377.0px;top:240.0px"><path d="M2 1.5c3.5 5 10.5 5 14 0" stroke="#bbb" stroke-width="1.1" fill="none"/></svg>
<div class="t" style="left:80.0px;top:237.6px;color:#d6d6d6;font-size:13px;line-height:13px;">def</div>
<svg width="18" height="8" viewBox="0 0 18 8" style="left:377.0px;top:262.0px"><path d="M2 1.5c3.5 5 10.5 5 14 0" stroke="#bbb" stroke-width="1.1" fill="none"/></svg>
<div class="t" style="left:80.0px;top:259.6px;color:#d6d6d6;font-size:13px;line-height:13px;">tgt</div>
<svg width="18" height="8" viewBox="0 0 18 8" style="left:377.0px;top:284.0px"><path d="M2 1.5c3.5 5 10.5 5 14 0" stroke="#bbb" stroke-width="1.1" fill="none"/></svg>
<div class="t" style="left:80.0px;top:281.6px;color:#d6d6d6;font-size:13px;line-height:13px;">mch</div>
<div class="abs" style="left:52.0px;top:301.3px;width:344.0px;height:19.4px;background:#4772b3;border-radius:4px"></div>
<svg width="7" height="7" viewBox="0 0 7 7" style="left:61.0px;top:307.0px"><circle cx="3.3" cy="3.3" r="2.6" fill="#eee"/></svg>
<svg width="18" height="16" viewBox="0 0 18 16" style="left:377.0px;top:302.0px"><path d="M1.5 8c4-5.5 11-5.5 15 0-4 5.5-11 5.5-15 0z" fill="#f0f0f0"/><circle cx="9" cy="8" r="3.3" fill="#4772b3"/><circle cx="9" cy="8" r="1.4" fill="#f0f0f0"/></svg>
<div class="t" style="left:80.0px;top:303.6px;color:#e0e0e0;font-size:13px;line-height:13px;">ctrl</div>
<svg width="10" height="8" viewBox="0 0 10 8" style="left:57.0px;top:366.0px"><path d="M1.5 0.5v7l6.5-3.5z" fill="#bbb"/></svg>
<svg width="14" height="6" viewBox="0 0 14 6" style="left:228.0px;top:368.0px"><rect x="0" y="0" width="1.1" height="1.1" fill="#aaa"/><rect x="0" y="3" width="1.1" height="1.1" fill="#aaa"/><rect x="3" y="0" width="1.1" height="1.1" fill="#aaa"/><rect x="3" y="3" width="1.1" height="1.1" fill="#aaa"/><rect x="6" y="0" width="1.1" height="1.1" fill="#aaa"/><rect x="6" y="3" width="1.1" height="1.1" fill="#aaa"/><rect x="9" y="0" width="1.1" height="1.1" fill="#aaa"/><rect x="9" y="3" width="1.1" height="1.1" fill="#aaa"/></svg>
<div class="abs" style="left:411.0px;top:208.3px;width:20.0px;height:20.2px;background:#555555;border-radius:4px 4px 0 0"></div>
<div class="abs" style="left:411.0px;top:229.5px;width:20.0px;height:20.5px;background:#555555;border-radius:0 0 4px 4px"></div>
<svg width="20" height="20" viewBox="0 0 20 20" style="left:411.0px;top:208.3px"><path d="M10 4.5v11M4.5 10h11" stroke="#eee" stroke-width="1.3"/></svg>
<svg width="20" height="20" viewBox="0 0 20 20" style="left:411.0px;top:229.5px"><path d="M4.5 10h11" stroke="#eee" stroke-width="1.3"/></svg>
<div class="abs" style="left:411.0px;top:258.0px;width:20.0px;height:20.5px;background:#555555;border-radius:4px 4px 0 0"></div>
<div class="abs" style="left:411.0px;top:279.5px;width:20.0px;height:20.5px;background:#555555;border-radius:0 0 4px 4px"></div>
<svg width="20" height="20" viewBox="0 0 20 20" style="left:411.0px;top:258.0px"><path d="M10 6l5 6h-10z" fill="#eee"/></svg>
<svg width="20" height="20" viewBox="0 0 20 20" style="left:411.0px;top:279.5px"><path d="M10 14l5-6h-10z" fill="#eee"/></svg>
<div class="abs" style="left:410.5px;top:307.7px;width:21.0px;height:21.0px;background:#2a2a2a;border-radius:4px;border:1px solid #3c3c3c"></div>
<svg width="10" height="10" viewBox="0 0 10 10" style="left:416.0px;top:313.0px"><path d="M1.5 3l3.5 3.5 3.5-3.5" stroke="#e0e0e0" stroke-width="1.2" fill="none"/></svg>
<div class="abs" style="left:47.0px;top:388.0px;width:92.0px;height:19.8px;background:#545454;border-radius:4px 0 0 4px"></div>
<div class="abs" style="left:140.0px;top:388.0px;width:94.0px;height:19.8px;background:#545454;border-radius:0 4px 4px 0"></div>
<div class="abs" style="left:244.0px;top:388.0px;width:92.5px;height:19.8px;background:#545454;border-radius:4px 0 0 4px"></div>
<div class="abs" style="left:337.5px;top:388.0px;width:93.5px;height:19.8px;background:#545454;border-radius:0 4px 4px 0"></div>
<div class="t" style="left:47.0px;top:390.7px;width:92.0px;text-align:center;color:#e6e6e6;font-size:13px;line-height:13px;">Assign</div>
<div class="t" style="left:140.0px;top:390.7px;width:94.0px;text-align:center;color:#e6e6e6;font-size:13px;line-height:13px;">Remove</div>
<div class="t" style="left:244.0px;top:390.7px;width:92.5px;text-align:center;color:#e6e6e6;font-size:13px;line-height:13px;">Select</div>
<div class="t" style="left:337.5px;top:390.7px;width:93.5px;text-align:center;color:#e6e6e6;font-size:13px;line-height:13px;">Deselect</div>
<svg width="12" height="10" viewBox="0 0 12 10" style="left:61.0px;top:425.3px"><path d="M1.5 2.5l4.5 4.5 4.5-4.5" stroke="#bbb" stroke-width="1.1" fill="none"/></svg>
<div class="t" style="left:77.4px;top:424.9px;color:#d6d6d6;font-size:13px;line-height:13px;letter-spacing:-0.15px">Custom Properties</div>
<div class="abs" style="left:38.0px;top:444.0px;width:401.8px;height:48.5px;background:#303030;border-radius:0 0 5px 5px"></div>
<div class="abs" style="left:47.0px;top:453.3px;width:384.0px;height:19.3px;background:#5a5a5a;border-radius:4px"></div>
<svg width="16" height="16" viewBox="0 0 16 16" style="left:51.0px;top:455.0px"><path d="M8 3v10M3 8h10" stroke="#eee" stroke-width="1.4"/></svg>
<div class="t" style="left:65.0px;top:455.4px;width:366.0px;text-align:center;color:#e6e6e6;font-size:13px;line-height:13px;">New</div>
<svg width="10" height="14" viewBox="0 0 10 14" style="left:47.0px;top:501.0px"><path d="M2.5 1.5l5 5.5-5 5.5" stroke="#bbb" stroke-width="1.1" fill="none"/></svg>
<div class="t" style="left:62.3px;top:502.8px;color:#d6d6d6;font-size:13px;line-height:13px;letter-spacing:0.48px">Motion Paths</div>
<svg width="13" height="7" viewBox="0 0 13 7" style="left:421.0px;top:505.5px"><rect x="0" y="1.2" width="1.2" height="1.2" fill="#161616"/><rect x="0" y="4.2" width="1.2" height="1.2" fill="#161616"/><rect x="3" y="1.2" width="1.2" height="1.2" fill="#161616"/><rect x="3" y="4.2" width="1.2" height="1.2" fill="#161616"/><rect x="6" y="1.2" width="1.2" height="1.2" fill="#161616"/><rect x="6" y="4.2" width="1.2" height="1.2" fill="#161616"/><rect x="9" y="1.2" width="1.2" height="1.2" fill="#161616"/><rect x="9" y="4.2" width="1.2" height="1.2" fill="#161616"/><rect x="0" y="0" width="1.2" height="1.2" fill="#b4b4b4"/><rect x="0" y="3" width="1.2" height="1.2" fill="#b4b4b4"/><rect x="3" y="0" width="1.2" height="1.2" fill="#b4b4b4"/><rect x="3" y="3" width="1.2" height="1.2" fill="#b4b4b4"/><rect x="6" y="0" width="1.2" height="1.2" fill="#b4b4b4"/><rect x="6" y="3" width="1.2" height="1.2" fill="#b4b4b4"/><rect x="9" y="0" width="1.2" height="1.2" fill="#b4b4b4"/><rect x="9" y="3" width="1.2" height="1.2" fill="#b4b4b4"/></svg>
<svg width="12" height="10" viewBox="0 0 12 10" style="left:46.0px;top:532.3px"><path d="M1.5 2.5l4.5 4.5 4.5-4.5" stroke="#bbb" stroke-width="1.1" fill="none"/></svg>
<div class="t" style="left:62.3px;top:531.8px;color:#d6d6d6;font-size:13px;line-height:13px;letter-spacing:0.54px">Viewport Display</div>
<svg width="13" height="7" viewBox="0 0 13 7" style="left:421.0px;top:534.5px"><rect x="0" y="1.2" width="1.2" height="1.2" fill="#161616"/><rect x="0" y="4.2" width="1.2" height="1.2" fill="#161616"/><rect x="3" y="1.2" width="1.2" height="1.2" fill="#161616"/><rect x="3" y="4.2" width="1.2" height="1.2" fill="#161616"/><rect x="6" y="1.2" width="1.2" height="1.2" fill="#161616"/><rect x="6" y="4.2" width="1.2" height="1.2" fill="#161616"/><rect x="9" y="1.2" width="1.2" height="1.2" fill="#161616"/><rect x="9" y="4.2" width="1.2" height="1.2" fill="#161616"/><rect x="0" y="0" width="1.2" height="1.2" fill="#b4b4b4"/><rect x="0" y="3" width="1.2" height="1.2" fill="#b4b4b4"/><rect x="3" y="0" width="1.2" height="1.2" fill="#b4b4b4"/><rect x="3" y="3" width="1.2" height="1.2" fill="#b4b4b4"/><rect x="6" y="0" width="1.2" height="1.2" fill="#b4b4b4"/><rect x="6" y="3" width="1.2" height="1.2" fill="#b4b4b4"/><rect x="9" y="0" width="1.2" height="1.2" fill="#b4b4b4"/><rect x="9" y="3" width="1.2" height="1.2" fill="#b4b4b4"/></svg>
<div class="abs" style="left:38.0px;top:551.0px;width:401.8px;height:90.0px;background:#383838;"></div>
<div class="t" style="left:-113.3px;top:562.5px;width:300px;text-align:right;color:#d2d2d2;font-size:13px;line-height:13px;">Display As</div>
<div class="abs" style="left:195.8px;top:559.5px;width:213.4px;height:21.1px;background:#282828;border-radius:4px;border:1px solid #3e3e3e"></div>
<div class="t" style="left:205.0px;top:562.5px;color:#e6e6e6;font-size:13px;line-height:13px;">Octahedral</div>
<svg width="10" height="10" viewBox="0 0 10 10" style="left:393.0px;top:566.0px"><path d="M1.5 3l3.5 3.5 3.5-3.5" stroke="#e0e0e0" stroke-width="1.2" fill="none"/></svg>
<svg width="8" height="8" viewBox="0 0 8 8" style="left:417.0px;top:566.0px"><circle cx="4" cy="4" r="2.6" fill="#e0e0e0"/></svg>
<div class="t" style="left:-114.5px;top:589.8px;width:300px;text-align:right;color:#d2d2d2;font-size:13px;line-height:13px;">Show</div>
<div class="abs" style="left:197.0px;top:590.0px;width:14.0px;height:14.0px;background:#4772b3;border-radius:3px"></div>
<svg width="14" height="14" viewBox="0 0 14 14" style="left:197.0px;top:590.0px"><path d="M3 7.2l2.8 2.8 5-5.5" stroke="#fff" stroke-width="1.6" fill="none"/></svg>
<div class="t" style="left:215.7px;top:590.3px;color:#e0e0e0;font-size:13px;line-height:13px;">Names</div>
<svg width="8" height="8" viewBox="0 0 8 8" style="left:417.0px;top:593.0px"><circle cx="4" cy="4" r="2.6" fill="#e0e0e0"/></svg>
<div class="abs" style="left:197.0px;top:614.0px;width:14.0px;height:14.0px;background:#4772b3;border-radius:3px"></div>
<svg width="14" height="14" viewBox="0 0 14 14" style="left:197.0px;top:614.0px"><path d="M3 7.2l2.8 2.8 5-5.5" stroke="#fff" stroke-width="1.6" fill="none"/></svg>
<div class="t" style="left:215.7px;top:614.3px;color:#e0e0e0;font-size:13px;line-height:13px;">Shapes</div>
<svg width="8" height="8" viewBox="0 0 8 8" style="left:417.0px;top:617.0px"><circle cx="4" cy="4" r="2.6" fill="#e0e0e0"/></svg>
<div class="abs" style="left:197.0px;top:638.0px;width:14.0px;height:14.0px;background:#4772b3;border-radius:3px"></div>
<svg width="14" height="14" viewBox="0 0 14 14" style="left:197.0px;top:638.0px"><path d="M3 7.2l2.8 2.8 5-5.5" stroke="#fff" stroke-width="1.6" fill="none"/></svg>
<div class="t" style="left:215.7px;top:638.3px;color:#e0e0e0;font-size:13px;line-height:13px;">Bone Colors</div>
<svg width="8" height="8" viewBox="0 0 8 8" style="left:417.0px;top:641.0px"><circle cx="4" cy="4" r="2.6" fill="#e0e0e0"/></svg>
</div>
</body></html>
